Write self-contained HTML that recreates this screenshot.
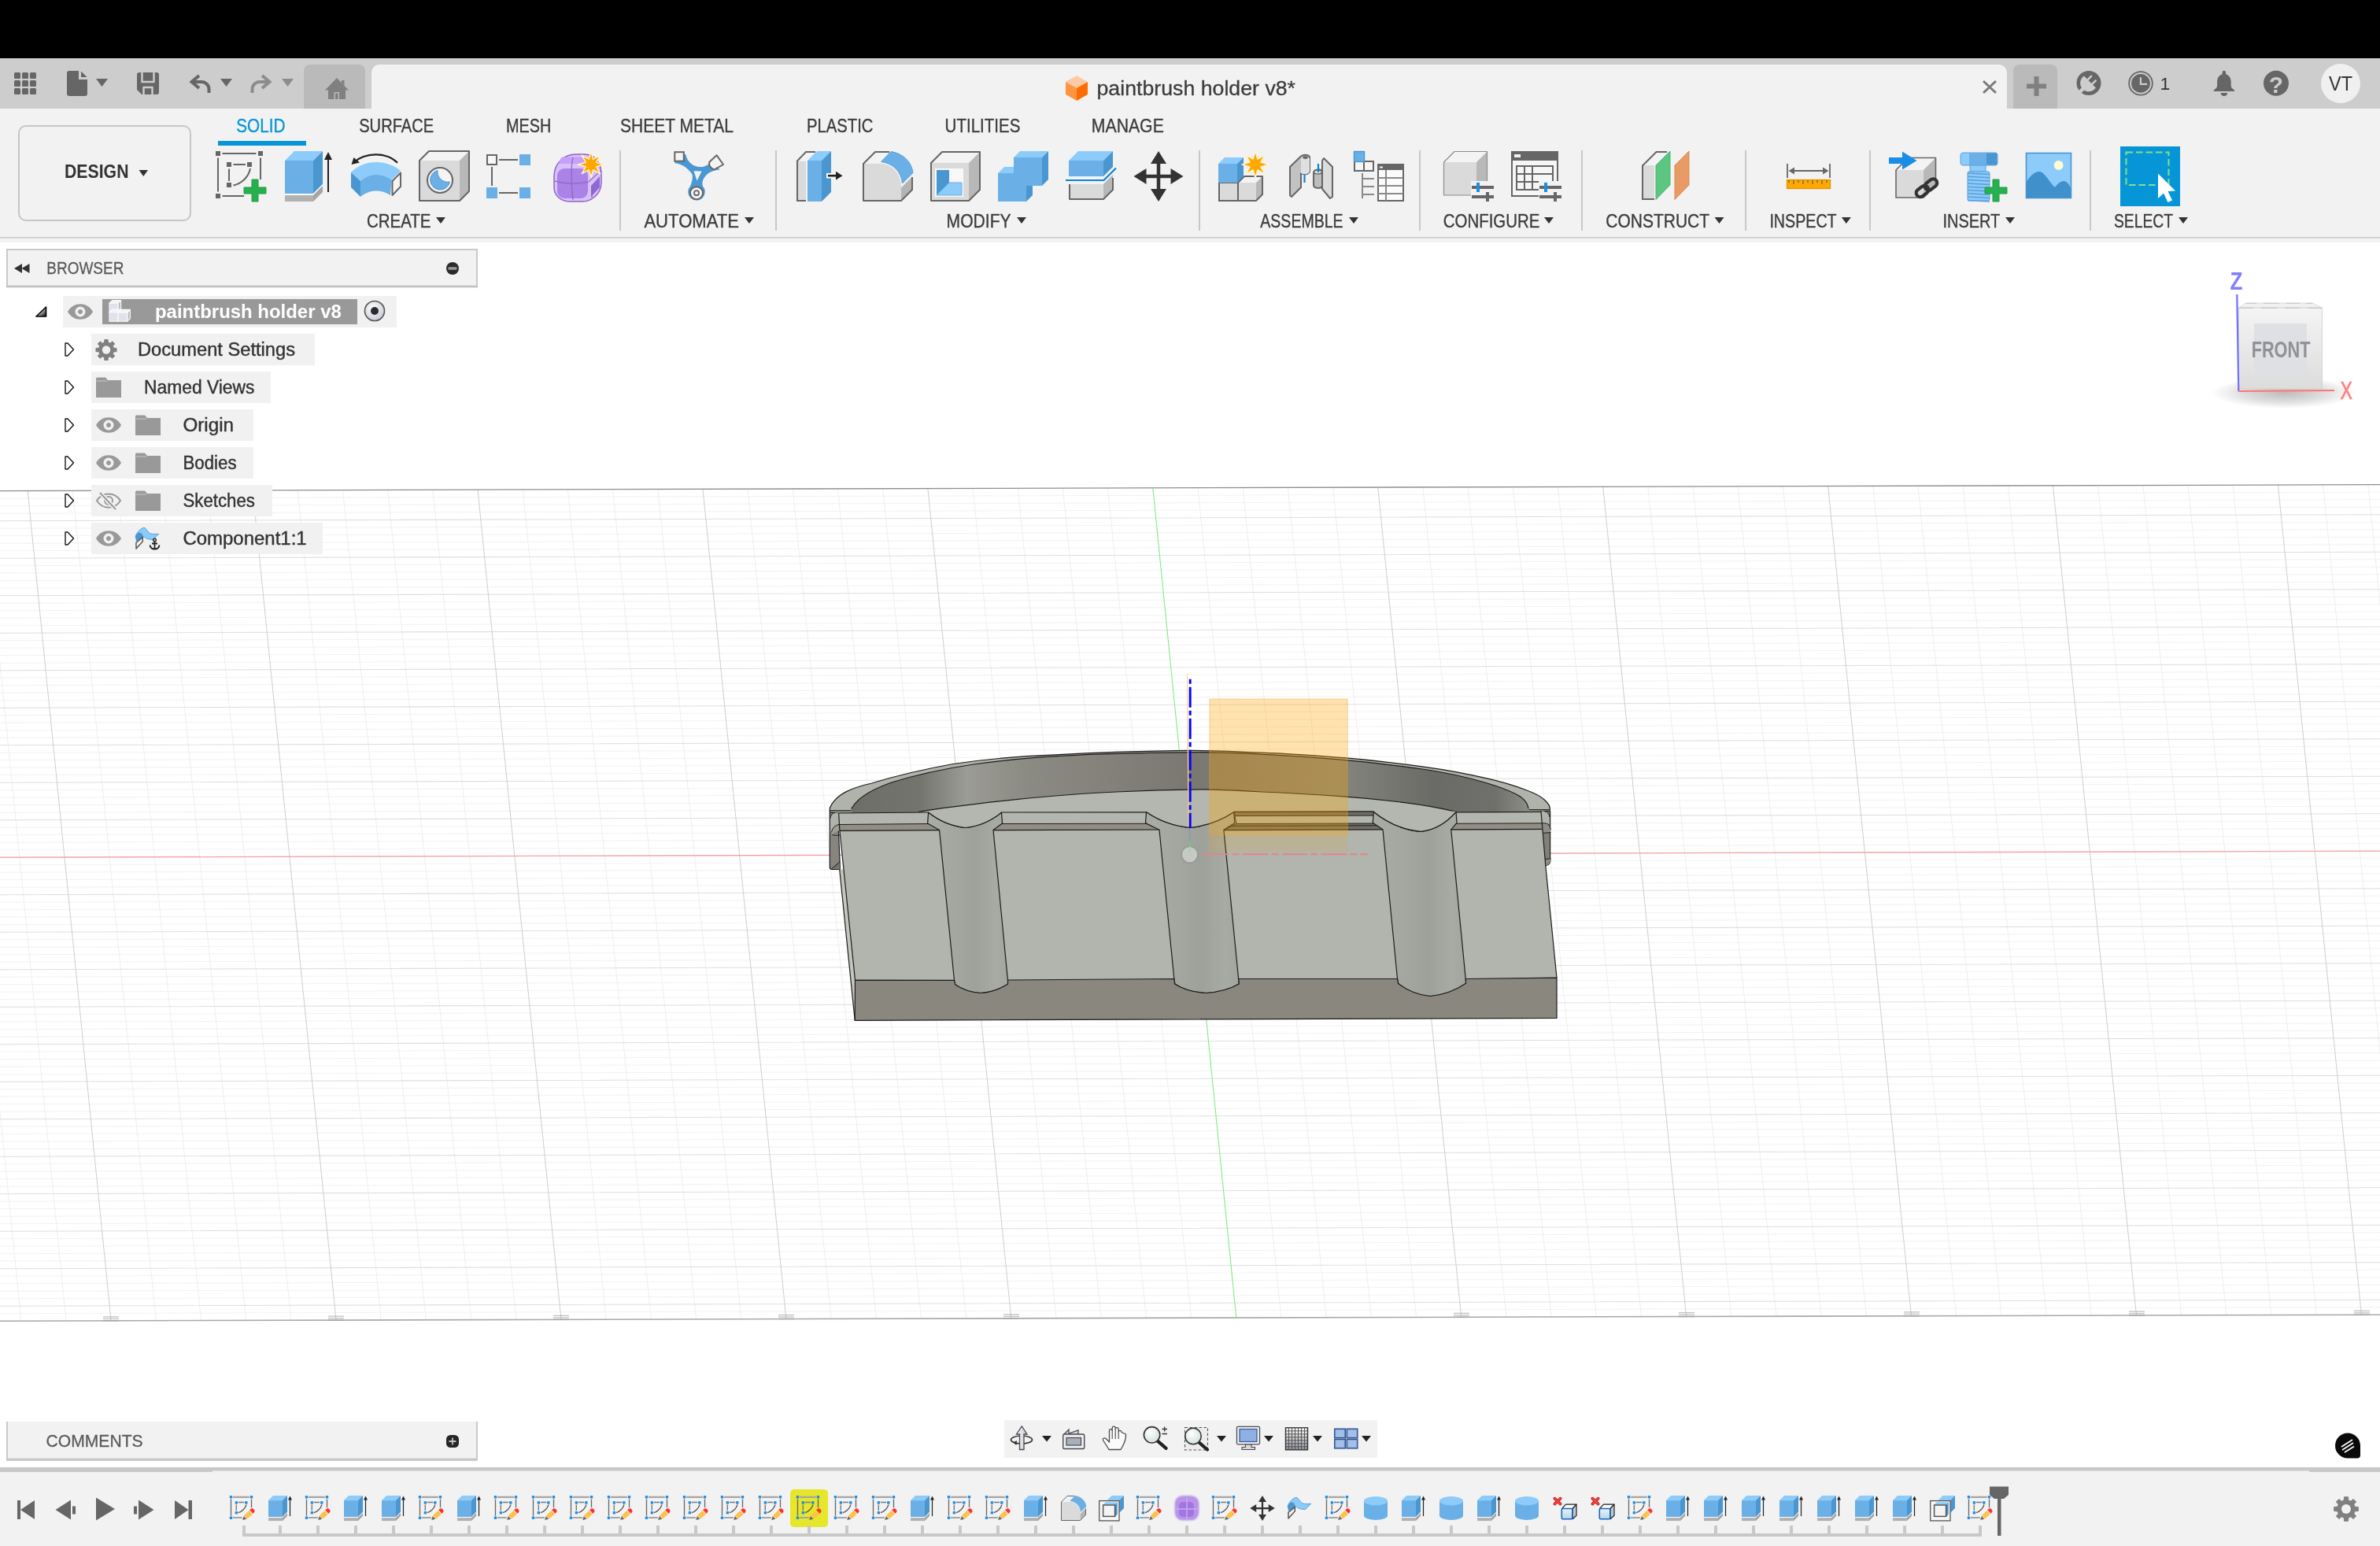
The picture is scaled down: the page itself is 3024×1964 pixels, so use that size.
<!DOCTYPE html>
<html><head><meta charset="utf-8"><title>Fusion</title><style>
html,body{margin:0;padding:0;width:3024px;height:1964px;overflow:hidden;background:#fff}
svg{position:absolute;left:0;top:0;display:block}
text{font-family:"Liberation Sans",sans-serif;white-space:pre;opacity:0.999}
</style></head><body>
<svg width="3024" height="1964" viewBox="0 0 3024 1964">
<g id="canvas">
<rect x="0" y="302" width="3024" height="1562" fill="#ffffff" />
<path d="M0 633.2L3024 625.2M0 642.7L3024 634.7M0 652.2L3024 644.2M0 671.2L3024 663.2M0 680.7L3024 672.7M0 690.2L3024 682.2M0 699.7L3024 691.7M0 718.7L3024 710.7M0 728.2L3024 720.2M0 737.7L3024 729.7M0 747.2L3024 739.2M0 766.2L3024 758.2M0 775.7L3024 767.7M0 785.2L3024 777.2M0 794.7L3024 786.7M0 813.7L3024 805.7M0 823.2L3024 815.2M0 832.7L3024 824.7M0 842.2L3024 834.2M0 861.2L3024 853.2M0 870.7L3024 862.7M0 880.2L3024 872.2M0 889.7L3024 881.7M0 908.7L3024 900.7M0 918.2L3024 910.2M0 927.7L3024 919.7M0 937.2L3024 929.2M0 956.2L3024 948.2M0 965.7L3024 957.7M0 975.2L3024 967.2M0 984.7L3024 976.7M0 1003.7L3024 995.7M0 1013.2L3024 1005.2M0 1022.7L3024 1014.7M0 1032.2L3024 1024.2M0 1051.2L3024 1043.2M0 1060.7L3024 1052.7M0 1070.2L3024 1062.2M0 1079.7L3024 1071.7M0 1098.7L3024 1090.7M0 1108.2L3024 1100.2M0 1117.7L3024 1109.7M0 1127.2L3024 1119.2M0 1146.2L3024 1138.2M0 1155.7L3024 1147.7M0 1165.2L3024 1157.2M0 1174.7L3024 1166.7M0 1193.7L3024 1185.7M0 1203.2L3024 1195.2M0 1212.7L3024 1204.7M0 1222.2L3024 1214.2M0 1241.2L3024 1233.2M0 1250.7L3024 1242.7M0 1260.2L3024 1252.2M0 1269.7L3024 1261.7M0 1288.7L3024 1280.7M0 1298.2L3024 1290.2M0 1307.7L3024 1299.7M0 1317.2L3024 1309.2M0 1336.2L3024 1328.2M0 1345.7L3024 1337.7M0 1355.2L3024 1347.2M0 1364.7L3024 1356.7M0 1383.7L3024 1375.7M0 1393.2L3024 1385.2M0 1402.7L3024 1394.7M0 1412.2L3024 1404.2M0 1431.2L3024 1423.2M0 1440.7L3024 1432.7M0 1450.2L3024 1442.2M0 1459.7L3024 1451.7M0 1478.7L3024 1470.7M0 1488.2L3024 1480.2M0 1497.7L3024 1489.7M0 1507.2L3024 1499.2M0 1526.2L3024 1518.2M0 1535.7L3024 1527.7M0 1545.2L3024 1537.2M0 1554.7L3024 1546.7M0 1573.7L3024 1565.7M0 1583.2L3024 1575.2M0 1592.7L3024 1584.7M0 1602.2L3024 1594.2M0 1621.2L3024 1613.2M0 1630.7L3024 1622.7M0 1640.2L3024 1632.2M0 1649.7L3024 1641.7M0 1668.7L3024 1660.7" fill="none" stroke="#f2f2f2" stroke-width="1" />
<path d="M-79.2 623.9L26.8 1678.1M-22.0 623.8L84.0 1678.0M92.4 623.5L198.3 1677.7M149.6 623.3L255.5 1677.5M206.7 623.2L312.7 1677.4M263.9 623.0L369.9 1677.2M378.3 622.7L484.2 1676.9M435.5 622.5L541.4 1676.8M492.7 622.4L598.6 1676.6M549.9 622.2L655.8 1676.5M664.2 621.9L770.2 1676.2M721.4 621.8L827.4 1676.0M778.6 621.6L884.5 1675.9M835.8 621.5L941.7 1675.7M950.1 621.2L1056.1 1675.4M1007.3 621.0L1113.3 1675.2M1064.5 620.9L1170.5 1675.1M1121.7 620.7L1227.6 1674.9M1236.1 620.4L1342.0 1674.6M1293.3 620.3L1399.2 1674.5M1350.4 620.1L1456.4 1674.3M1407.6 620.0L1513.6 1674.2M1522.0 619.7L1627.9 1673.9M1579.2 619.5L1685.1 1673.7M1636.4 619.4L1742.3 1673.6M1693.5 619.2L1799.5 1673.4M1807.9 618.9L1913.9 1673.1M1865.1 618.8L1971.1 1673.0M1922.3 618.6L2028.2 1672.8M1979.5 618.5L2085.4 1672.7M2093.8 618.2L2199.8 1672.4M2151.0 618.0L2257.0 1672.2M2208.2 617.8L2314.2 1672.1M2265.4 617.7L2371.3 1671.9M2379.8 617.4L2485.7 1671.6M2437.0 617.2L2542.9 1671.5M2494.1 617.1L2600.1 1671.3M2551.3 616.9L2657.3 1671.2M2665.7 616.6L2771.6 1670.9M2722.9 616.5L2828.8 1670.7M2780.1 616.3L2886.0 1670.6M2837.2 616.2L2943.2 1670.4M2951.6 615.9L3057.6 1670.1M3008.8 615.7L3114.7 1669.9" fill="none" stroke="#eeeeee" stroke-width="1" />
<path d="M0 661.7L3024 653.7M0 709.2L3024 701.2M0 756.7L3024 748.7M0 804.2L3024 796.2M0 851.7L3024 843.7M0 899.2L3024 891.2M0 946.7L3024 938.7M0 994.2L3024 986.2M0 1041.7L3024 1033.7M0 1089.2L3024 1081.2M0 1136.7L3024 1128.7M0 1184.2L3024 1176.2M0 1231.7L3024 1223.7M0 1279.2L3024 1271.2M0 1326.7L3024 1318.7M0 1374.2L3024 1366.2M0 1421.7L3024 1413.7M0 1469.2L3024 1461.2M0 1516.7L3024 1508.7M0 1564.2L3024 1556.2M0 1611.7L3024 1603.7M0 1659.2L3024 1651.2" fill="none" stroke="#dedede" stroke-width="1.05" />
<path d="M35.2 623.6L141.1 1677.8M321.1 622.8L427.1 1677.1M607.0 622.1L713.0 1676.3M893.0 621.3L998.9 1675.6M1178.9 620.6L1284.8 1674.8M1750.7 619.1L1856.7 1673.3M2036.7 618.3L2142.6 1672.5M2322.6 617.5L2428.5 1671.8M2608.5 616.8L2714.5 1671.0M2894.4 616.0L3000.4 1670.2" fill="none" stroke="#d0d0d0" stroke-width="1.05" />
<path d="M0 623.7L3024 615.7" fill="none" stroke="#8e8e8e" stroke-width="1.3" />
<path d="M0 1678.2L3024 1670.2" fill="none" stroke="#a8a8a8" stroke-width="1.6" />
<rect x="130.955" y="1672.23" width="20" height="1.3" fill="#9a9a9a" opacity="0.6"/>
<rect x="130.955" y="1674.73" width="20" height="1.3" fill="#9a9a9a" opacity="0.6"/>
<rect x="130.955" y="1677.23" width="20" height="1.3" fill="#9a9a9a" opacity="0.6"/>
<rect x="416.955" y="1671.47" width="20" height="1.3" fill="#9a9a9a" opacity="0.6"/>
<rect x="416.955" y="1673.97" width="20" height="1.3" fill="#9a9a9a" opacity="0.6"/>
<rect x="416.955" y="1676.47" width="20" height="1.3" fill="#9a9a9a" opacity="0.6"/>
<rect x="702.955" y="1670.71" width="20" height="1.3" fill="#9a9a9a" opacity="0.6"/>
<rect x="702.955" y="1673.21" width="20" height="1.3" fill="#9a9a9a" opacity="0.6"/>
<rect x="702.955" y="1675.71" width="20" height="1.3" fill="#9a9a9a" opacity="0.6"/>
<rect x="988.955" y="1669.95" width="20" height="1.3" fill="#9a9a9a" opacity="0.6"/>
<rect x="988.955" y="1672.45" width="20" height="1.3" fill="#9a9a9a" opacity="0.6"/>
<rect x="988.955" y="1674.95" width="20" height="1.3" fill="#9a9a9a" opacity="0.6"/>
<rect x="1274.96" y="1669.19" width="20" height="1.3" fill="#9a9a9a" opacity="0.6"/>
<rect x="1274.96" y="1671.69" width="20" height="1.3" fill="#9a9a9a" opacity="0.6"/>
<rect x="1274.96" y="1674.19" width="20" height="1.3" fill="#9a9a9a" opacity="0.6"/>
<rect x="1846.96" y="1667.68" width="20" height="1.3" fill="#9a9a9a" opacity="0.6"/>
<rect x="1846.96" y="1670.18" width="20" height="1.3" fill="#9a9a9a" opacity="0.6"/>
<rect x="1846.96" y="1672.68" width="20" height="1.3" fill="#9a9a9a" opacity="0.6"/>
<rect x="2132.96" y="1666.92" width="20" height="1.3" fill="#9a9a9a" opacity="0.6"/>
<rect x="2132.96" y="1669.42" width="20" height="1.3" fill="#9a9a9a" opacity="0.6"/>
<rect x="2132.96" y="1671.92" width="20" height="1.3" fill="#9a9a9a" opacity="0.6"/>
<rect x="2418.96" y="1666.16" width="20" height="1.3" fill="#9a9a9a" opacity="0.6"/>
<rect x="2418.96" y="1668.66" width="20" height="1.3" fill="#9a9a9a" opacity="0.6"/>
<rect x="2418.96" y="1671.16" width="20" height="1.3" fill="#9a9a9a" opacity="0.6"/>
<rect x="2704.96" y="1665.41" width="20" height="1.3" fill="#9a9a9a" opacity="0.6"/>
<rect x="2704.96" y="1667.91" width="20" height="1.3" fill="#9a9a9a" opacity="0.6"/>
<rect x="2704.96" y="1670.41" width="20" height="1.3" fill="#9a9a9a" opacity="0.6"/>
<rect x="2990.96" y="1664.65" width="20" height="1.3" fill="#9a9a9a" opacity="0.6"/>
<rect x="2990.96" y="1667.15" width="20" height="1.3" fill="#9a9a9a" opacity="0.6"/>
<rect x="2990.96" y="1669.65" width="20" height="1.3" fill="#9a9a9a" opacity="0.6"/>
<path d="M0 1089.2L3024 1081.2" fill="none" stroke="#f5a3a3" stroke-width="1.3" />
<path d="M1464.8 619.8L1570.8 1674.0" fill="none" stroke="#80e880" stroke-width="1.05" />
<defs>
<linearGradient id="wall" x1="0" y1="0" x2="1" y2="0">
<stop offset="0" stop-color="#6e6e69"/><stop offset="0.10" stop-color="#74746e"/><stop offset="0.17" stop-color="#9b9c95"/><stop offset="0.26" stop-color="#8b8a83"/>
<stop offset="0.5" stop-color="#7b7871"/><stop offset="0.72" stop-color="#85857e"/><stop offset="0.86" stop-color="#6a6b66"/><stop offset="0.95" stop-color="#6f706b"/><stop offset="1" stop-color="#8c8d87"/></linearGradient>
<linearGradient id="grv" x1="0" y1="0" x2="1" y2="0">
<stop offset="0" stop-color="#a9aca5"/><stop offset="0.35" stop-color="#a4a7a0"/><stop offset="0.6" stop-color="#9ea19a"/><stop offset="0.85" stop-color="#a8aba4"/><stop offset="1" stop-color="#a2a59e"/></linearGradient>
</defs>
<path d="M1054.6 1026C1062 1008 1085 1000 1107.6 995C1140 985 1175 977 1211 970.5C1255 964 1297 960.5 1340.6 958.8C1392 956 1444 954.3 1495.8 953.6C1530 953 1570 954.5 1603.5 956.2C1640 957.5 1672 960 1707 962.7C1745 966 1778 970 1810.6 974.3C1838 978 1864 983 1888.2 988.6C1908 993 1926 998.500 1940 1004C1952 1008.500 1960 1013 1963.3 1017C1967 1020.500 1969 1023 1969 1026L1969 1035L1054.6 1035Z" fill="#b0b3ab" />
<path d="M1081.8 1027.4C1090 1012 1110 1002 1133.5 993.8C1165 984 1200 976.500 1237 971C1280 965 1322 961 1366.4 959.3C1418 957 1470 956 1521.7 955.7C1585 956 1648 960.500 1707 965.3C1745 968.500 1778 973 1810.6 977.5C1838 981.500 1866 988 1888.2 994.5C1905 999.500 1918 1004.500 1927 1009.3C1936 1014 1941 1020 1942 1027.4L1942 1035L1081.8 1035Z" fill="url(#wall)" />
<path d="M1167.2 1031.3C1205 1025 1245 1020.500 1288.8 1015.8C1332 1011.500 1374 1008 1418.2 1006C1455 1004 1492 1002.900 1530 1002.8C1555 1003.200 1580 1004.500 1603.5 1006C1640 1007.500 1673 1009.500 1707 1011.9C1735 1014 1760 1016.500 1784.7 1019.6C1808 1022.500 1830 1026.500 1850.7 1031.3L1850.7 1060L1167.2 1060Z" fill="#b4b7af" />
<path d="M1054.6 1026C1062 1008 1085 1000 1107.6 995C1140 985 1175 977 1211 970.5C1255 964 1297 960.5 1340.6 958.8C1392 956 1444 954.3 1495.8 953.6C1530 953 1570 954.5 1603.5 956.2C1640 957.5 1672 960 1707 962.7C1745 966 1778 970 1810.6 974.3C1838 978 1864 983 1888.2 988.6C1908 993 1926 998.500 1940 1004C1952 1008.500 1960 1013 1963.3 1017C1967 1020.500 1969 1023 1969 1026" fill="none" stroke="#1c1c1c" stroke-width="1.2" />
<path d="M1054.4 1025.500V1031M1969.300 1025.500V1031" fill="none" stroke="#1c1c1c" stroke-width="1.2" />
<path d="M1081.8 1027.4C1090 1012 1110 1002 1133.5 993.8C1165 984 1200 976.500 1237 971C1280 965 1322 961 1366.4 959.3C1418 957 1470 956 1521.7 955.7C1585 956 1648 960.500 1707 965.3C1745 968.500 1778 973 1810.6 977.5C1838 981.500 1866 988 1888.2 994.5C1905 999.500 1918 1004.500 1927 1009.3C1936 1014 1941 1020 1942 1027.4" fill="none" stroke="#1c1c1c" stroke-width="1.2" />
<path d="M1167.2 1031.3C1205 1025 1245 1020.500 1288.8 1015.8C1332 1011.500 1374 1008 1418.2 1006C1455 1004 1492 1002.900 1530 1002.8C1555 1003.200 1580 1004.500 1603.5 1006C1640 1007.500 1673 1009.500 1707 1011.9C1735 1014 1760 1016.500 1784.7 1019.6C1808 1022.500 1830 1026.500 1850.7 1031.3" fill="none" stroke="#1c1c1c" stroke-width="1.2" />
<polygon points="1054.6,1029.6 1081.5,1029.8 1081.8,1032.4 1054.6,1032.4" fill="#8d8b83" />
<polygon points="1942.5,1028.6 1969.4,1028.4 1969.4,1031 1942.2,1030.6" fill="#8d8b83" />
<path d="M1054.6 1029.700H1081.5M1942.5 1028.600H1969.4" fill="none" stroke="#1c1c1c" stroke-width="1" />
<path d="M1054.3 1030V1101.500Q1054.3 1104.500 1057 1104.500H1067.5L1064.500 1032.500H1054.3Z" fill="#86857e" stroke="#1c1c1c" stroke-width="1.2" stroke-linejoin="round"/>
<path d="M1061 1032.500H1065.500L1066.300 1047.500C1061 1048 1057.500 1052 1056.400 1057.500L1055 1057.500V1040C1055 1036 1057.500 1033 1061 1032.500Z" fill="#b0b3ab" />
<path d="M1056.400 1057.500C1057.500 1052 1061 1048 1066.300 1047.500L1066.800 1055.300C1062 1056 1058.500 1058 1057.200 1060.500Z" fill="#a09d94" />
<polygon points="1056.8,1103.5 1067,1095 1067.5,1104.5" fill="#74736d" />
<path d="M1061 1032.500C1057.500 1033 1055 1036 1054.800 1040M1066.300 1047.500C1061 1048 1057.500 1052 1056.400 1057.500M1057.200 1060.500C1060 1061.500 1063 1061.500 1067 1061M1056.800 1103.500L1067 1095" fill="none" stroke="#1c1c1c" stroke-width="1" />
<path d="M1957.8 1030.500H1969.600V1090C1970.600 1095 1968 1098.500 1964.200 1099.800L1962.800 1099.800Z" fill="#807f78" stroke="#1c1c1c" stroke-width="1.2" stroke-linejoin="round"/>
<path d="M1957.8 1030.500H1962C1966 1031 1968.500 1034 1968.900 1038V1047C1967 1046.200 1965 1046 1962.900 1046H1958.700Z" fill="#b0b3ab" />
<path d="M1958.700 1045.800H1962.900C1967 1046 1969.800 1049 1970.200 1054V1057.500L1959.700 1058.500Z" fill="#8f8e86" />
<path d="M1962.300 1091.500L1970.500 1090.800C1970.800 1095 1968 1098.500 1964.200 1099.800L1962.900 1099.800Z" fill="#8f8e86" />
<path d="M1962 1030.600C1966 1031 1968.500 1034 1968.900 1038M1958.700 1045.800H1962.900C1967 1046 1969.800 1049 1970.200 1054M1959.700 1058.500L1970.400 1057.500M1962.300 1091.500L1970.500 1090.800" fill="none" stroke="#1c1c1c" stroke-width="1" />
<path d="M1065.5 1033L1958 1030.8L1963.7 1098.5L1978 1242.2L1978 1293.4L1086.2 1296.3L1086.5 1245.1L1066.9 1055.3Z" fill="#b1b5ad" />
<polygon points="1066.7,1104.5 1071.9,1104.5 1086.5,1245.1 1086.2,1296.3" fill="#c3c6be" />
<polygon points="1065.5,1033 1179.6,1032 1180.6,1046.5 1064.5,1047.5" fill="#b3b6ae" /><polygon points="1064.5,1047.5 1180.6,1046.5 1193.6,1054.8 1066.9,1056" fill="#938e84" /><path d="M1064.5 1047.5L1180.6 1046.5" fill="none" stroke="#1c1c1c" stroke-width="1" />
<polygon points="1272.5,1032 1456.5,1031.8 1457.5,1046.3 1271.5,1046.5" fill="#b3b6ae" /><polygon points="1271.5,1046.5 1457.5,1046.3 1473,1054.6 1262,1055" fill="#938e84" /><path d="M1271.5 1046.5L1457.5 1046.3" fill="none" stroke="#1c1c1c" stroke-width="1" />
<polygon points="1850,1031.8 1958,1031.3 1959,1045.8 1849,1046.3" fill="#b3b6ae" /><polygon points="1849,1046.3 1959,1045.8 1959.4,1054.1 1843.7,1054.8" fill="#938e84" /><path d="M1849 1046.3L1959 1045.8" fill="none" stroke="#1c1c1c" stroke-width="1" />
<polygon points="1567.8,1031.3 1745.3,1030.8 1746,1036 1569,1036.5" fill="#6f6d65" />
<polygon points="1569,1036.5 1746,1036 1749,1046 1571,1046.5" fill="#b3b6ae" />
<polygon points="1571,1046.5 1749,1046 1757,1053.8 1554.9,1054.6 1565,1049" fill="#716e66" />
<path d="M1569 1036.5L1746 1036M1571 1046.5L1749 1046M1565 1049.300L1752 1048.800M1567.8 1031.3L1569 1036.500L1571 1046.500L1565 1049.300L1554.9 1054.6" fill="none" stroke="#1c1c1c" stroke-width="1" />
<path d="M1179.6 1032Q1200.15 1048.5 1226.7 1051.5Q1252.6 1048.5 1272.5 1032L1273.5 1046L1262 1054.6L1280.5 1245.5L1281.0 1250.5Q1267.25 1260.5 1246 1261.5Q1225.25 1260.5 1213.5 1250.5L1212.5 1245.5L1193.6 1054.6L1178.6 1046Z" fill="url(#grv)" stroke="#1c1c1c" stroke-width="1.2" stroke-linejoin="round"/><path d="M1179.6 1032Q1200.15 1048.5 1226.7 1051.5Q1252.6 1048.5 1272.5 1032L1272.5 1031.4L1179.6 1031.4Z" fill="#b4b7af" /><path d="M1179.6 1032Q1200.15 1048.5 1226.7 1051.5Q1252.6 1048.5 1272.5 1032" fill="none" stroke="#1c1c1c" stroke-width="1.2" />
<path d="M1456.5 1031.6Q1481.05 1048.5 1511.6 1051.5Q1542.6999999999998 1048.5 1567.8 1031.6L1568.8 1045.6L1554.9 1054.3L1573.8 1245L1574.3 1250Q1557.05 1260.5 1532.3 1261.5Q1508.15 1260.5 1493 1250L1492 1245L1473 1054.3L1455.5 1045.6Z" fill="url(#grv)" stroke="#1c1c1c" stroke-width="1.2" stroke-linejoin="round"/><path d="M1456.5 1031.6Q1481.05 1048.5 1511.6 1051.5Q1542.6999999999998 1048.5 1567.8 1031.6L1567.8 1031.0L1456.5 1031.0Z" fill="#b4b7af" /><path d="M1456.5 1031.6Q1481.05 1048.5 1511.6 1051.5Q1542.6999999999998 1048.5 1567.8 1031.6" fill="none" stroke="#1c1c1c" stroke-width="1.2" />
<path d="M1745.3 1031.3Q1772.35 1053.4 1805.4 1056.4Q1830.7 1053.4 1850 1031.3L1851 1045.3L1843.7 1053.8L1862.3 1244.2L1862.8 1249.2Q1843.65 1264.5 1817 1265.5Q1792.3 1264.5 1776.6 1249.2L1775.6 1244.2L1757 1053.8L1744.3 1045.3Z" fill="url(#grv)" stroke="#1c1c1c" stroke-width="1.2" stroke-linejoin="round"/><path d="M1745.3 1031.3Q1772.35 1053.4 1805.4 1056.4Q1830.7 1053.4 1850 1031.3L1850 1030.7L1745.3 1030.7Z" fill="#b4b7af" /><path d="M1745.3 1031.3Q1772.35 1053.4 1805.4 1056.4Q1830.7 1053.4 1850 1031.3" fill="none" stroke="#1c1c1c" stroke-width="1.2" />
<path d="M1086.5 1245.1L1212.5 1245.3L1213.7 1250.7Q1227 1260 1246 1261.500Q1265 1260 1280.5 1250L1280.5 1245L1492 1243.5L1492.5 1250Q1508 1260 1532.3 1261.500Q1556 1260 1574.3 1250L1573.8 1243.5L1775.6 1243.5L1776.4 1249.2Q1794 1263 1817 1265.500Q1842 1263 1862.5 1249.2L1862.3 1243.5L1978 1242.2L1978 1293.4L1086.2 1296.3Z" fill="#8a877f" stroke="#1c1c1c" stroke-width="1.2" stroke-linejoin="round"/>
<path d="M1066.9 1055.3L1193.6 1054.6M1262 1054.6L1473 1054M1554.9 1054.6L1757 1053.8M1843.7 1053.8L1959.4 1053.3" fill="none" stroke="#1c1c1c" stroke-width="1.2" />
<path d="M1065.5 1033L1179.6 1032M1272.5 1032L1456.5 1031.8M1850 1031.8L1958 1031.3M1567.8 1031.3L1745.3 1030.8" fill="none" stroke="#1c1c1c" stroke-width="1.2" />
<path d="M1065.6 1033L1066.9 1055.3L1086.5 1245.1" fill="none" stroke="#1c1c1c" stroke-width="1.2" />
<path d="M1066.7 1104.5L1086.2 1296.3" fill="none" stroke="#1c1c1c" stroke-width="1.2" />
<path d="M1958 1030.8L1963.7 1098.5L1978 1242.2" fill="none" stroke="#1c1c1c" stroke-width="1.2" />
<rect x="1536.9" y="888" width="175.3" height="172.9" fill="#ffa500" stroke="#f0a030" stroke-width="0.8" fill-opacity="0.32" stroke-opacity="0.5"/>
<rect x="1535.5" y="1061" width="176" height="20.8" fill="#ffa500" opacity="0.13"/>
<polygon points="1508.1,855.5 1508.9,855.5 1511.2,1050 1509.4,1050" fill="#f5c583" />
<path d="M1512.2 862.700V1051.6" fill="none" stroke="#0404f5" stroke-width="2.9" stroke-dasharray="6 4 26 4"/>
<path d="M1512 1052V1068.700" fill="none" stroke="#8a96b4" stroke-width="1.4" />
<path d="M1511.8 1068.700V1086" fill="none" stroke="#62d862" stroke-width="1.4" />
<circle cx="1511.6" cy="1085.6" r="10.600" fill="#cbcec8" fill-opacity="0.9" stroke="#9a9a9a" stroke-width="2"/>
<path d="M1511.6 1074V1084" fill="none" stroke="#8fdc8f" stroke-width="1.2" />
<path d="M1528.5 1085.3H1738" fill="none" stroke="#e8837f" stroke-width="1.9" stroke-dasharray="33 4 9 4"/>
<defs><radialGradient id="vcs" cx="50%" cy="50%" r="50%"><stop offset="0" stop-color="#000" stop-opacity="0.26"/><stop offset="0.6" stop-color="#000" stop-opacity="0.12"/><stop offset="1" stop-color="#000" stop-opacity="0"/></radialGradient><linearGradient id="vcf" x1="0" y1="0" x2="0" y2="1"><stop offset="0" stop-color="#f4f4f4"/><stop offset="1" stop-color="#dcdcdc"/></linearGradient></defs><ellipse cx="2902" cy="499" rx="92" ry="20" fill="url(#vcs)"/><polygon points="2844.5,391 2853,385 2938,385 2950.5,391" fill="#f0f0f0" stroke="#d5d5d5" stroke-width="0.8" /><rect x="2844.5" y="391" width="106" height="103" fill="url(#vcf)" stroke="#cfcfcf" stroke-width="0.8" /><path d="M2853 385.300H2938" fill="none" stroke="#c4c4c4" stroke-width="1" stroke-dasharray="14 9 20 9 17 8"/><path d="M2845 391.300H2950" fill="none" stroke="#c4c4c4" stroke-width="1" stroke-dasharray="18 10 20 10 19 10"/><rect x="2864" y="411" width="67" height="65" fill="#dfe0e3" /><text x="2860.7" y="454.4" font-size="28.6" fill="#8f9196" textLength="74.7" lengthAdjust="spacingAndGlyphs" font-weight="bold" >FRONT</text><path d="M2842.300 374L2844.300 497" fill="none" stroke="#7070ff" stroke-width="2.2" /><path d="M2844.300 497L2966 496" fill="none" stroke="#ff7474" stroke-width="2" /><text x="2833.5" y="368.4" font-size="31.5" fill="#8080ff" textLength="16" lengthAdjust="spacingAndGlyphs" font-weight="bold" >Z</text><text x="2973.5" y="506.5" font-size="30.5" fill="#ff8080" textLength="15.5" lengthAdjust="spacingAndGlyphs" stroke="#ff8080" stroke-width="0.700">X</text>
</g>
<g id="chrome">
<rect x="0" y="0" width="3024" height="74" fill="#000" />
<rect x="0" y="74" width="3024" height="64" fill="#cdcdcd" />
<path d="M386 138V90a8 8 0 0 1 8-8H456a8 8 0 0 1 8 8V138Z" fill="#bababa" />
<path d="M472 138V92a10 10 0 0 1 10-10H2540a10 10 0 0 1 10 10V138Z" fill="#f2f2f2" />
<path d="M2558 138V90a8 8 0 0 1 8-8H2606a8 8 0 0 1 8 8V138Z" fill="#bababa" />
<rect x="0" y="138" width="3024" height="170" fill="#f2f2f2" />
<rect x="0" y="301" width="3024" height="1.5" fill="#c9c9c9" />
<rect x="18" y="92" width="8" height="8" fill="#666" rx="1.5" />
<rect x="18" y="102" width="8" height="8" fill="#666" rx="1.5" />
<rect x="18" y="112" width="8" height="8" fill="#666" rx="1.5" />
<rect x="28" y="92" width="8" height="8" fill="#666" rx="1.5" />
<rect x="28" y="102" width="8" height="8" fill="#666" rx="1.5" />
<rect x="28" y="112" width="8" height="8" fill="#666" rx="1.5" />
<rect x="38" y="92" width="8" height="8" fill="#666" rx="1.5" />
<rect x="38" y="102" width="8" height="8" fill="#666" rx="1.5" />
<rect x="38" y="112" width="8" height="8" fill="#666" rx="1.5" />
<path d="M88 90H100V101H111V119a3 3 0 0 1-3 3H88a3 3 0 0 1-3-3V93a3 3 0 0 1 3-3Z M103 90.5L110.5 98H103Z" fill="#666" />
<polygon points="122,100 137,100 129.5,110" fill="#666" />
<path d="M177 92H199a3 3 0 0 1 3 3V117a3 3 0 0 1-3 3H180L174 114V95a3 3 0 0 1 3-3Z" fill="#666" />
<path d="M180.5 92V104H195.5V92 M182.5 120V111H193.5V120" fill="none" stroke="#cdcdcd" stroke-width="2.4" />
<path d="M253 96L243.5 104L253 112 M244 104H256a9.5 9.5 0 0 1 9.5 9.5V118" fill="none" stroke="#666" stroke-width="4" stroke-linejoin="miter"/>
<polygon points="280,100 295,100 287.5,110" fill="#666" />
<path d="M333 96L342.5 104L333 112 M342 104H330a9.5 9.5 0 0 0-9.5 9.5V118" fill="none" stroke="#8c8c8c" stroke-width="4" />
<polygon points="358,100 373,100 365.5,110" fill="#8c8c8c" />
<path d="M428 99L413 114.5H417V126H439V114.5H443ZM434 102h3.500v7l-3.500-3.500Z" fill="#808080" />
<path d="M425.300 126V117.700H430.300V126" fill="none" stroke="#bababa" stroke-width="1.5" />
<polygon points="1368,96 1382,104 1368,112 1354,104" fill="#ffc9a3" />
<polygon points="1354,104 1368,112 1368,128 1354,120" fill="#ff9443" />
<polygon points="1382,104 1368,112 1368,128 1382,120" fill="#ff6b00" />
<text x="1393.5" y="120.5" font-size="26" fill="#3c3c3c" textLength="252.5" lengthAdjust="spacingAndGlyphs" stroke="#3c3c3c" stroke-width="0.3">paintbrush holder v8*</text>
<path d="M2520 103L2536 118M2536 103L2520 118" fill="none" stroke="#7a7a7a" stroke-width="3" />
<path d="M2587.5 97V122M2575 109.5H2600" fill="none" stroke="#808080" stroke-width="6" />
<circle cx="2654" cy="105.500" r="15.500" fill="#666"/>
<g transform="translate(2654 105.500) rotate(-45)" fill="#cdcdcd"><path d="M2 -10.600A10.800 10.800 0 1 0 2 10.600Z"/><rect x="1" y="-5.200" width="8.500" height="2.500" rx="1"/><rect x="1" y="2.700" width="8.500" height="2.500" rx="1"/><rect x="-16.500" y="-2.300" width="7" height="4.600"/></g>
<circle cx="2720" cy="105.900" r="14.800" fill="none" stroke="#666" stroke-width="1.800"/>
<circle cx="2720" cy="105.900" r="11.900" fill="#666"/>
<path d="M2719.900 98.200V106.900H2728" fill="none" stroke="#cdcdcd" stroke-width="2.2" />
<text x="2744.5" y="113.9" font-size="22.9" fill="#333" >1</text>
<path d="M2823.700 92a2.200 2.200 0 0 1 4.400 0V94.300C2832.500 95.500 2834.700 99.500 2834.700 104V108.500C2834.700 110.500 2835.500 111.800 2836.800 112.800L2839 114.500V116H2812.800V114.500L2815 112.800C2816.300 111.800 2817.100 110.500 2817.100 108.500V104C2817.100 99.500 2819.300 95.500 2823.700 94.300ZM2821.700 118.100H2830.100A4.200 4 0 0 1 2821.700 118.100Z" fill="#666" />
<circle cx="2892" cy="105.800" r="16" fill="#666"/>
<text x="2892" y="117.6" font-size="30" fill="#cdcdcd" font-weight="bold" text-anchor="middle" >?</text>
<circle cx="2974" cy="106" r="25" fill="#f0f0f0"/>
<text x="2974" y="115" font-size="26" fill="#333" textLength="30" lengthAdjust="spacingAndGlyphs" text-anchor="middle" >VT</text>
<text x="300.3" y="168.3" font-size="23.2" fill="#0696d7" textLength="62.1" lengthAdjust="spacingAndGlyphs" stroke="#0696d7" stroke-width="0.35">SOLID</text>
<text x="456.2" y="168.3" font-size="23.2" fill="#3c3c3c" textLength="95" lengthAdjust="spacingAndGlyphs" stroke="#3c3c3c" stroke-width="0.35">SURFACE</text>
<text x="643" y="168.3" font-size="23.2" fill="#3c3c3c" textLength="57.3" lengthAdjust="spacingAndGlyphs" stroke="#3c3c3c" stroke-width="0.35">MESH</text>
<text x="788" y="168.3" font-size="23.2" fill="#3c3c3c" textLength="144" lengthAdjust="spacingAndGlyphs" stroke="#3c3c3c" stroke-width="0.35">SHEET METAL</text>
<text x="1025" y="168.3" font-size="23.2" fill="#3c3c3c" textLength="84.4" lengthAdjust="spacingAndGlyphs" stroke="#3c3c3c" stroke-width="0.35">PLASTIC</text>
<text x="1200.6" y="168.3" font-size="23.2" fill="#3c3c3c" textLength="95.9" lengthAdjust="spacingAndGlyphs" stroke="#3c3c3c" stroke-width="0.35">UTILITIES</text>
<text x="1386.8" y="168.3" font-size="23.2" fill="#3c3c3c" textLength="92" lengthAdjust="spacingAndGlyphs" stroke="#3c3c3c" stroke-width="0.35">MANAGE</text>
<rect x="277" y="179" width="112" height="6" fill="#0696d7" />
<rect x="24" y="160" width="218" height="120" fill="#f2f2f2" stroke="#c6c6c6" stroke-width="2" rx="9" />
<text x="82" y="226" font-size="23" fill="#333" textLength="81.5" lengthAdjust="spacingAndGlyphs" font-weight="bold" >DESIGN</text>
<polygon points="176.5,216 188,216 182.25,224" fill="#333" />
<text x="466" y="289" font-size="23.2" fill="#3c3c3c" textLength="81.5" lengthAdjust="spacingAndGlyphs" stroke="#3c3c3c" stroke-width="0.35">CREATE</text>
<polygon points="554,276 566,276 560,284" fill="#333" />
<text x="818.4" y="289" font-size="23.2" fill="#3c3c3c" textLength="120.6" lengthAdjust="spacingAndGlyphs" stroke="#3c3c3c" stroke-width="0.35">AUTOMATE</text>
<polygon points="946,276 958,276 952,284" fill="#333" />
<text x="1202.6" y="289" font-size="23.2" fill="#3c3c3c" textLength="82" lengthAdjust="spacingAndGlyphs" stroke="#3c3c3c" stroke-width="0.35">MODIFY</text>
<polygon points="1292,276 1304,276 1298,284" fill="#333" />
<text x="1601.3" y="289" font-size="23.2" fill="#3c3c3c" textLength="105.3" lengthAdjust="spacingAndGlyphs" stroke="#3c3c3c" stroke-width="0.35">ASSEMBLE</text>
<polygon points="1714,276 1726,276 1720,284" fill="#333" />
<text x="1833.8" y="289" font-size="23.2" fill="#3c3c3c" textLength="122.5" lengthAdjust="spacingAndGlyphs" stroke="#3c3c3c" stroke-width="0.35">CONFIGURE</text>
<polygon points="1962,276 1974,276 1968,284" fill="#333" />
<text x="2040.3" y="289" font-size="23.2" fill="#3c3c3c" textLength="131.7" lengthAdjust="spacingAndGlyphs" stroke="#3c3c3c" stroke-width="0.35">CONSTRUCT</text>
<polygon points="2178.5,276 2190.5,276 2184.5,284" fill="#333" />
<text x="2248.4" y="289" font-size="23.2" fill="#3c3c3c" textLength="85.2" lengthAdjust="spacingAndGlyphs" stroke="#3c3c3c" stroke-width="0.35">INSPECT</text>
<polygon points="2339.8,276 2351.8,276 2345.8,284" fill="#333" />
<text x="2468.5" y="289" font-size="23.2" fill="#3c3c3c" textLength="72.8" lengthAdjust="spacingAndGlyphs" stroke="#3c3c3c" stroke-width="0.35">INSERT</text>
<polygon points="2548,276 2560,276 2554,284" fill="#333" />
<text x="2686" y="289" font-size="23.2" fill="#3c3c3c" textLength="75" lengthAdjust="spacingAndGlyphs" stroke="#3c3c3c" stroke-width="0.35">SELECT</text>
<polygon points="2768,276 2780,276 2774,284" fill="#333" />
<rect x="787" y="191" width="2" height="102" fill="#c8c8c8" />
<rect x="985" y="191" width="2" height="102" fill="#c8c8c8" />
<rect x="1523" y="191" width="2" height="102" fill="#c8c8c8" />
<rect x="1803" y="191" width="2" height="102" fill="#c8c8c8" />
<rect x="2009" y="191" width="2" height="102" fill="#c8c8c8" />
<rect x="2217" y="191" width="2" height="102" fill="#c8c8c8" />
<rect x="2375" y="191" width="2" height="102" fill="#c8c8c8" />
<rect x="2655" y="191" width="2" height="102" fill="#c8c8c8" />
</g>
<g id="toolbar">
<path d="M282.5 195.0H325.5M277.0 200.5V243.5M331.0 200.5V228.0M282.5 249.0H310.0" fill="none" stroke="#666" stroke-width="2" /><path d="M296.5 209.0H312.0M291.0 214.5V230.0M318.0 214.0C316.0 225.0 307.0 233.0 296.5 235.5" fill="none" stroke="#666" stroke-width="2" /><rect x="274" y="192" width="6" height="6" fill="#666" /><rect x="328" y="192" width="6" height="6" fill="#666" /><rect x="274" y="246" width="6" height="6" fill="#666" /><rect x="288" y="206" width="6" height="6" fill="#666" /><rect x="314" y="206" width="6" height="6" fill="#666" /><rect x="288" y="232" width="6" height="6" fill="#666" />
<path d="M320.0 228h8v10.0h10.0v8h-10.0v10.0h-8v-10.0h-10.0v-8h10.0Z" fill="#27b050" stroke="#1f9c45" stroke-width="1" />
<polygon points="362,204 374,192 410,192 398,204" fill="#8ccbfa" /><polygon points="398,204 410,192 410,234 398,246" fill="#4a96d0" /><rect x="362" y="204" width="36" height="42" fill="#6ab0e6" /><polygon points="362,246 398,246 410,234 410,236 398,248 362,248" fill="#fbfbfb" /><rect x="362" y="248" width="36" height="8" fill="#b2b2b2" /><polygon points="398,248 410,236 410,244 398,256" fill="#a4a4a4" /><path d="M417.0 201.0V244.0" fill="none" stroke="#222" stroke-width="2.0" /><polygon points="417,193 412,203 422,203" fill="#222" />
<path d="M505 206.800C498 199.500 487 196 477 196.300C466 196.600 456 200.500 450 206" fill="none" stroke="#222" stroke-width="2.2" />
<polygon points="446.5,209 449.5,200 457,206.5" fill="#222" />
<path d="M446 219C455 210 466 206 478 206C490 206 501 210 509 217L497.6 228.500C492 224 485 222 478 222C471 222 464 224.500 458 230Z" fill="#8ccbfa" />
<path d="M458 230C464 224.500 471 222 478 222C485 222 492 224 497.6 228.500L496 248C490 244 484 242.400 478 242.400C471 242.400 464 245 458 250Z" fill="#6ab0e6" />
<polygon points="446,219 458,230 458,250 446,238" fill="#4a96d0" />
<polygon points="498.5,230 509,219.5 509,237 498.5,248" fill="#f4f4f4" stroke="#666" stroke-width="2" stroke-linejoin="round"/>
<polygon points="533,204 545,192 596,192 584,204" fill="#f3f3f3" /><polygon points="584,204 596,192 596,243 584,255" fill="#b8b8b8" /><rect x="533" y="204" width="51" height="51" fill="#dadada" /><path d="M533 204L545 192H596V243L584 255H533Z" fill="none" stroke="#666" stroke-width="2" stroke-linejoin="round"/>
<path d="M533 204H584L596 192M584 204V255" fill="none" stroke="#666" stroke-width="0" />
<circle cx="559" cy="229" r="16" fill="#f4f4f4" stroke="#666" stroke-width="2"/>
<path d="M556 216.500a12.500 12.500 0 1 0 15.500 14.500a13 13 0 0 1-15.500-14.500Z" fill="#6ab0e6" stroke="#4a96d0" stroke-width="1" />
<path d="M634 203H658M625 212V236M634 245H658" fill="none" stroke="#666" stroke-width="2" />
<rect x="619" y="197" width="12" height="12" fill="#f6f6f6" stroke="#666" stroke-width="2" />
<rect x="660" y="196" width="14" height="14" fill="#6ab0e6" />
<rect x="618" y="238" width="14" height="14" fill="#6ab0e6" />
<rect x="660" y="238" width="14" height="14" fill="#6ab0e6" />
<path d="M704 224C704 208 716 196 732 196H742C756 196 764 206 764 222V232C764 246 752 256 740 256H724C712 256 704 248 704 238Z" fill="#d9c0fa" stroke="#8f63c8" stroke-width="1.5" />
<path d="M714 199.500H742C748 199.500 752 203 754 208H710C711 204 712 201 714 199.500Z" fill="#c6a0fc" />
<rect x="708" y="214" width="39" height="38" fill="#ab82e8" rx="9" />
<path d="M751 250L762 238V224L751 236Z" fill="#8f68d2" />
<path d="M705 230C718 234 736 234 748 231M728 200C725 210 726 240 728 254M748 231L763 217M752 251V236" fill="none" stroke="#8a68bd" stroke-width="1.5" opacity="0.8"/>
<polygon points="751,192.5 753.8,202.2 762.7,197.3 757.8,206.2 767.5,209 757.8,211.8 762.7,220.7 753.8,215.8 751,225.5 748.2,215.8 739.3,220.7 744.2,211.8 734.5,209 744.2,206.2 739.3,197.3 748.2,202.2" fill="#ffa800" stroke="#fff3cf" stroke-width="1.5" stroke-linejoin="round"/>
<path d="M857.500 204V207.200C866 208 874 213 879.600 221.600C880.500 227 879 232 877 236.500A10.800 10.800 0 1 0 893 236.500C891.500 232 893 226 899.800 220.300C904 217.500 909 216 914.500 215.500L905 204.500C900 210 894 212.500 889.700 212.100C880 211.500 873.500 206 871.200 196H867V204Z" fill="#4a98d3" />
<polygon points="881.5,217.2 891.6,217.4 885.6,229.4" fill="#f2f2f2" />
<circle cx="885" cy="245.200" r="8" fill="#f4f4f4" stroke="#666" stroke-width="2"/><circle cx="885" cy="245.200" r="3" fill="#f4f4f4" stroke="#666" stroke-width="1.800"/>
<rect x="857.3" y="193.2" width="11.5" height="11.5" fill="#f4f4f4" stroke="#666" stroke-width="2" />
<path d="M910.500 197.200L919 209L907.300 215.500C902.500 213.500 900.500 210 901.200 206Z" fill="#f4f4f4" stroke="#666" stroke-width="2" stroke-linejoin="round"/>
<polygon points="1013,205 1024,194 1036,194 1025,205" fill="#f3f3f3" />
<rect x="1013" y="205" width="11" height="50" fill="#dadada" />
<path d="M1036 193H1024L1013 204.500V255H1024" fill="none" stroke="#666" stroke-width="2" />
<polygon points="1026,204 1038,192 1056,192 1044,204" fill="#8ccbfa" /><polygon points="1044,204 1056,192 1056,244 1044,256" fill="#4a96d0" /><rect x="1026" y="204" width="18" height="52" fill="#6ab0e6" />
<rect x="1050" y="220" width="7" height="6.5" fill="#fbfbfb" />
<path d="M1052 223.200H1064" fill="none" stroke="#222" stroke-width="2.6" />
<polygon points="1070.5,223.2 1062,217.8 1062,228.6" fill="#222" />
<polygon points="1098,207 1112,193 1131,193 1119,206" fill="#f3f3f3" /><path d="M1098 208H1120C1135 209 1145 222 1145 238V255H1098Z" fill="#dadada" /><path d="M1119.500 205.500L1132 192.500C1148 195 1158.500 206 1160 219.500L1146.500 233C1145 218 1135 207.500 1119.500 205.500Z" fill="#6ab0e6" stroke="#5aa2dc" stroke-width="1" /><polygon points="1145,238.5 1159,224.5 1159,241 1145,255" fill="#b4b4b4" /><path d="M1130 193H1112L1097 208V255H1145L1159 241V225" fill="none" stroke="#666" stroke-width="2" stroke-linejoin="round"/>
<polygon points="1183,207 1197,193 1245,193 1231,207" fill="#f3f3f3" /><polygon points="1231,207 1245,193 1245,241 1231,255" fill="#b8b8b8" /><rect x="1183" y="207" width="48" height="48" fill="#dadada" /><path d="M1183 207L1197 193H1245V241L1231 255H1183Z" fill="none" stroke="#666" stroke-width="2" stroke-linejoin="round"/>
<rect x="1188" y="214" width="36" height="36" fill="#f8f8f8" />
<polygon points="1190,216 1206,216 1206,232 1190,248" fill="#4a96d0" />
<polygon points="1190,248 1206,232 1222,232 1222,248" fill="#8ccbfa" stroke="#6ab0e6" stroke-width="1" />
<polygon points="1288,200 1296,192 1332,192 1324,200" fill="#8ccbfa" /><polygon points="1324,200 1332,192 1332,228 1324,236" fill="#4a96d0" /><rect x="1288" y="200" width="36" height="36" fill="#6ab0e6" />
<polygon points="1268,220 1276,212 1288,212 1288,220" fill="#8ccbfa" />
<polygon points="1304,236 1312,236 1312,248 1304,256" fill="#4a96d0" />
<path d="M1268 220H1288V236H1304V256H1268Z" fill="#6ab0e6" />
<rect x="1288" y="200" width="36" height="36" fill="#6ab0e6" />
<polygon points="1358,204 1370,192 1414,192 1402,204" fill="#8ccbfa" /><polygon points="1402,204 1414,192 1414,212 1402,224" fill="#4a96d0" /><rect x="1358" y="204" width="44" height="20" fill="#6ab0e6" />
<polygon points="1358,234 1402,234 1414,222 1414,241 1402,253 1358,253" fill="#dadada" />
<polygon points="1402,234 1414,222 1414,241 1402,253" fill="#b8b8b8" />
<path d="M1359 234V253H1402L1414 241V226" fill="none" stroke="#666" stroke-width="2" stroke-linejoin="round"/>
<path d="M1354 229H1402.500L1418 213.500" fill="none" stroke="#0a84d8" stroke-width="2.2" />
<path d="M1472 205V243M1453 224H1491" fill="none" stroke="#333" stroke-width="4.5" /><polygon points="1472,192 1462,208 1482,208" fill="#333" /><polygon points="1472,256 1462,240 1482,240" fill="#333" /><polygon points="1440.5,224 1456.5,214 1456.5,234" fill="#333" /><polygon points="1503.5,224 1487.5,214 1487.5,234" fill="#333" />
<rect x="1549" y="232" width="24" height="23" fill="#dadada" stroke="#666" stroke-width="2" />
<polygon points="1573,232 1581,224 1604,224 1596,232" fill="#f4f4f4" /><polygon points="1596,232 1604,224 1604,247 1596,255" fill="#b8b8b8" /><rect x="1573" y="232" width="23" height="23" fill="#dadada" /><path d="M1573 232L1581 224H1604V247L1596 255H1573Z" fill="none" stroke="#666" stroke-width="2" stroke-linejoin="round"/>
<polygon points="1548,208 1556,200 1580,200 1572,208" fill="#8ccbfa" /><polygon points="1572,208 1580,200 1580,224 1572,232" fill="#4a96d0" /><rect x="1548" y="208" width="24" height="24" fill="#6ab0e6" />
<polygon points="1595,192 1597.9,202 1607,197 1602,206.1 1612,209 1602,211.9 1607,221 1597.9,216 1595,226 1592.1,216 1583,221 1588,211.9 1578,209 1588,206.1 1583,197 1592.1,202" fill="#ffa800" stroke="#fff3cf" stroke-width="1.5" stroke-linejoin="round"/>
<path d="M1639 212L1653 198.500C1656 196 1662 196 1664 199V218C1662 222 1657 222 1653 220V238L1641 250L1639 248Z" fill="#c2c2c2" stroke="#666" stroke-width="2" stroke-linejoin="round"/>
<path d="M1653 199V220C1657 222 1662 222 1664 218V200C1661 203 1656 203 1653 199Z" fill="#e0e0e0" />
<ellipse cx="1658.500" cy="200" rx="3.200" ry="1.800" fill="#666"/>
<path d="M1657.500 222V232" fill="none" stroke="#0a84d8" stroke-width="2.2" />
<path d="M1680 204L1682 201L1693 212V250L1690 252L1680 240Z" fill="#dcdcdc" stroke="#666" stroke-width="2" stroke-linejoin="round"/>
<path d="M1669 220C1669 214 1680 214 1680 219V236C1680 240 1669 240 1669 235Z" fill="#bdbdbd" stroke="#666" stroke-width="2" />
<ellipse cx="1674.500" cy="218.500" rx="5" ry="2.500" fill="#e4e4e4" stroke="#666" stroke-width="1.500"/>
<path d="M1675 208V219" fill="none" stroke="#0a84d8" stroke-width="2.2" />
<rect x="1721" y="205" width="12" height="12" fill="#f6f6f6" stroke="#666" stroke-width="2" />
<rect x="1733" y="205" width="12" height="12" fill="#f6f6f6" stroke="#666" stroke-width="2" />
<rect x="1720.5" y="192.5" width="13" height="13" fill="#6ab0e6" stroke="#4a96d0" stroke-width="1.4" />
<path d="M1731 220V252M1731 227H1746M1731 237H1746M1731 247H1746" fill="none" stroke="#8a8a8a" stroke-width="2" />
<rect x="1751" y="209" width="32" height="46" fill="#fbfbfb" stroke="#666" stroke-width="2" />
<rect x="1750" y="208" width="34" height="8" fill="#666" />
<rect x="1753" y="211.5" width="4" height="2" fill="#f2f2f2" />
<path d="M1761 216V255M1751 226H1783M1751 236H1783M1751 246H1783" fill="none" stroke="#8a8a8a" stroke-width="2" />
<polygon points="1834.5,206 1848,192.5 1889.5,192.5 1876,206" fill="#f3f3f3" /><polygon points="1876,206 1889.5,192.5 1889.5,234.5 1876,248" fill="#b8b8b8" /><rect x="1834.5" y="206" width="41.5" height="42" fill="#dadada" /><path d="M1834.5 206L1848.0 192.5H1889.5V234.5L1876.0 248H1834.5Z" fill="none" stroke="#8c8c8c" stroke-width="1.2" stroke-linejoin="round"/>
<rect x="1869" y="230" width="30" height="28" fill="#f2f2f2" /><path d="M1870 238H1898M1870 250H1898" fill="none" stroke="#666" stroke-width="4" /><rect x="1888" y="244" width="4" height="12" fill="#666" /><rect x="1876" y="232" width="4" height="12" fill="#1a8ee6" />
<rect x="1921" y="193" width="58" height="56" fill="#f6f6f6" stroke="#666" stroke-width="2" />
<rect x="1920" y="192" width="60" height="12" fill="#666" />
<rect x="1924" y="196" width="8" height="4" fill="#f2f2f2" />
<rect x="1927" y="211" width="46" height="30" fill="none" stroke="#666" stroke-width="2" />
<path d="M1937 211V241M1947 211V241M1927 221H1973M1927 231H1973" fill="none" stroke="#666" stroke-width="2" />
<rect x="1955" y="230" width="30" height="28" fill="#f2f2f2" /><path d="M1956 238H1984M1956 250H1984" fill="none" stroke="#666" stroke-width="4" /><rect x="1974" y="244" width="4" height="12" fill="#666" /><rect x="1962" y="232" width="4" height="12" fill="#1a8ee6" />
<polygon points="2087,210 2104,193 2118,193 2102,210" fill="#f3f3f3" />
<rect x="2087" y="210" width="15" height="43" fill="#dadada" />
<path d="M2118 193H2104.500L2087 210.500V253H2102" fill="none" stroke="#666" stroke-width="2" />
<polygon points="2104,210 2122,192 2122,235 2104,253.5" fill="#5bc682" stroke="#4db474" stroke-width="1" />
<polygon points="2128,210 2146,192 2146,235 2128,253.5" fill="#e89b65" stroke="#d98a55" stroke-width="1" />
<rect x="2270.5" y="228.5" width="55" height="11" fill="#ffa800" stroke="#e89600" stroke-width="1.4" />
<path d="M2273 229V232M2279 229V234M2285 229V232M2291 229V234M2297 229V232M2303 229V234M2309 229V232M2315 229V234M2321 229V232" fill="none" stroke="#7a6a3a" stroke-width="1.4" />
<path d="M2271 208V226M2325 208V226M2277 217H2319" fill="none" stroke="#666" stroke-width="1.8" />
<polygon points="2272.5,217 2280,212.5 2280,221.5" fill="#666" />
<polygon points="2323.5,217 2316,212.5 2316,221.5" fill="#666" />
<polygon points="2409,216 2424.5,200.5 2459.5,200.5 2444,216" fill="#f3f3f3" /><polygon points="2444,216 2459.5,200.5 2459.5,235.5 2444,251" fill="#b8b8b8" /><rect x="2409" y="216" width="35" height="35" fill="#dadada" /><path d="M2409 216L2424.5 200.5H2459.5V235.5L2444 251H2409Z" fill="none" stroke="#666" stroke-width="1.6" stroke-linejoin="round"/>
<path d="M2400 200H2417V192.500L2435.500 204L2417 215.500V208H2400Z" fill="#1a8ee6" />
<path d="M2441 246L2449 238a5 5 0 0 1 7 7L2452 249M2453 236L2457 232a5 5 0 0 0-7-7L2442 233" fill="none" stroke="#333" stroke-width="0" />
<g fill="none" stroke="#333" stroke-width="4.200"><rect x="2434" y="238" width="17" height="10" rx="5" transform="rotate(-38 2442.500 243)"/><rect x="2445" y="229.500" width="17" height="10" rx="5" transform="rotate(-38 2453.500 234.500)"/></g>
<path d="M2491 196L2493 194H2536L2538 196V208L2536 210H2493L2491 208Z" fill="#8ccbfa" stroke="#5aa2dc" stroke-width="1" />
<rect x="2502" y="194.5" width="22" height="15" fill="#6ab0e6" />
<rect x="2524" y="194.5" width="13.5" height="15" fill="#4a96d0" />
<rect x="2503" y="210" width="20" height="8" fill="#8ccbfa" stroke="#5aa2dc" stroke-width="1" />
<rect x="2500" y="218" width="28" height="37" fill="#8ccbfa" stroke="#5aa2dc" stroke-width="1" rx="2" />
<path d="M2500 220.0L2528 221.5M2500 224.3L2528 225.8M2500 228.6L2528 230.1M2500 232.9L2528 234.4M2500 237.2L2528 238.7M2500 241.5L2528 243.0M2500 245.8L2528 247.3M2500 250.1L2528 251.6M2500 254.4L2528 255.9" fill="none" stroke="#5a9fd8" stroke-width="1.5" />
<path d="M2532.0 228h8v10.0h10.0v8h-10.0v10.0h-8v-10.0h-10.0v-8h10.0Z" fill="#27b050" stroke="#1f9c45" stroke-width="1" />
<rect x="2574.5" y="194.5" width="57" height="57" fill="#8ccbfa" stroke="#4a96d0" stroke-width="1.6" />
<path d="M2575 231C2580 222 2586 218 2591 218C2598 218 2604 232 2611 238C2614 234 2618 230 2622 230C2626 230 2629 234 2631 239V251H2575Z" fill="#4090cc" />
<circle cx="2615.700" cy="210" r="6.200" fill="#ffffd0" stroke="#a8d4f5" stroke-width="1"/>
<rect x="2694" y="186" width="76" height="76" fill="#0696d7" />
<rect x="2701.5" y="193.5" width="54" height="41.5" fill="none" stroke="#86e086" stroke-width="2" stroke-dasharray="8.500 4"/>
<path d="M2742 220.500L2742 252L2749 245.500L2754.500 257L2760 254.500L2754.500 243L2764 242.500Z" fill="#fff" />
</g>
<g id="browser">
<rect x="9" y="317" width="597" height="46.5" fill="#f2f2f2" stroke="#c9c9c9" stroke-width="2" />
<path d="M8 364.5H607" fill="none" stroke="#bdbdbd" stroke-width="1.4" />
<polygon points="18,341 28,335 28,347" fill="#333" />
<polygon points="27.5,341 37.5,335 37.5,347" fill="#333" />
<text x="59.3" y="348" font-size="22.6" fill="#5a5a5a" textLength="98.1" lengthAdjust="spacingAndGlyphs" stroke="#5a5a5a" stroke-width="0.3">BROWSER</text>
<circle cx="575" cy="341" r="8" fill="#2b2b2b"/>
<rect x="569.5" y="339.2" width="11" height="3.6" fill="#9a9a9a" rx="1" />
<rect x="80" y="376" width="424" height="40" fill="#f1f1f1" />
<defs><linearGradient id="exg" x1="0" y1="0" x2="1" y2="1"><stop offset="0.35" stop-color="#e8e8e8"/><stop offset="1" stop-color="#000"/></linearGradient></defs>
<polygon points="46,402 58.5,402 58.5,390" fill="url(#exg)" stroke="#000" stroke-width="1.6" stroke-linejoin="round"/>
<path d="M86 396C93 383 111 383 118 396C111 409 93 409 86 396Z" fill="#999" /><circle cx="102" cy="396" r="6.500" fill="#f0f0f0"/><circle cx="102" cy="396" r="3" fill="#999"/><circle cx="102" cy="396" r="4.600" fill="none" stroke="#f0f0f0" stroke-width="3"/>
<rect x="130" y="380" width="324" height="32" fill="#999" />
<polygon points="139,385.2 142.6,381.6 153.6,381.6 150,385.2" fill="#f1f2f6" stroke="#fbfbfc" stroke-width="1.1" stroke-linejoin="round"/><polygon points="150,385.2 153.6,381.6 153.6,393.1 150,396.7" fill="#b7bbc8" stroke="#fbfbfc" stroke-width="1.1" stroke-linejoin="round"/><rect x="139" y="385.2" width="11" height="11.5" fill="#dfe2ea" stroke="#fbfbfc" stroke-width="1.1" />
<polygon points="139,396.7 142.6,393.1 153.6,393.1 150,396.7" fill="#f1f2f6" stroke="#fbfbfc" stroke-width="1.1" stroke-linejoin="round"/><polygon points="150,396.7 153.6,393.1 153.6,404.6 150,408.2" fill="#b7bbc8" stroke="#fbfbfc" stroke-width="1.1" stroke-linejoin="round"/><rect x="139" y="396.7" width="11" height="11.5" fill="#dfe2ea" stroke="#fbfbfc" stroke-width="1.1" />
<polygon points="150,397 153.6,393.4 165.4,393.4 161.8,397" fill="#f1f2f6" stroke="#fbfbfc" stroke-width="1.1" stroke-linejoin="round"/><polygon points="161.8,397 165.4,393.4 165.4,404.6 161.8,408.2" fill="#b7bbc8" stroke="#fbfbfc" stroke-width="1.1" stroke-linejoin="round"/><rect x="150" y="397" width="11.8" height="11.2" fill="#dfe2ea" stroke="#fbfbfc" stroke-width="1.1" />
<text x="197" y="403.8" font-size="23" fill="#fff" textLength="236.8" lengthAdjust="spacingAndGlyphs" font-weight="bold" >paintbrush holder v8</text>
<defs><radialGradient id="rdg" cx="40%" cy="35%" r="70%"><stop offset="0" stop-color="#fff"/><stop offset="1" stop-color="#c4c8d4"/></radialGradient></defs>
<circle cx="476" cy="395" r="12.500" fill="url(#rdg)" stroke="#555" stroke-width="1.600"/><circle cx="476" cy="395" r="5" fill="#2a2a2a"/>
<rect x="116" y="424" width="284" height="40" fill="#f1f1f1" />
<path d="M83 436H86L93.5 444L86 452H83Z" fill="#fff" stroke="#111" stroke-width="1.35" stroke-linejoin="round"/>
<polygon points="148.02,442.33 148.02,446.67 144.5,446.78 143.33,449.6 145.74,452.17 142.67,455.24 140.1,452.83 137.28,454 137.17,457.52 132.83,457.52 132.72,454 129.9,452.83 127.33,455.24 124.26,452.17 126.67,449.6 125.5,446.78 121.98,446.67 121.98,442.33 125.5,442.22 126.67,439.4 124.26,436.83 127.33,433.76 129.9,436.17 132.72,435 132.83,431.48 137.17,431.48 137.28,435 140.1,436.17 142.67,433.76 145.74,436.83 143.33,439.4 144.5,442.22" fill="#808080" stroke="#808080" stroke-width="1" stroke-linejoin="round"/><circle cx="135" cy="444.5" r="5.2" fill="#f1f1f1"/>
<text x="175" y="451.8" font-size="23" fill="#333" textLength="200" lengthAdjust="spacingAndGlyphs" stroke="#333" stroke-width="0.4">Document Settings</text>
<rect x="116" y="472" width="228" height="40" fill="#f1f1f1" />
<path d="M83 484H86L93.5 492L86 500H83Z" fill="#fff" stroke="#111" stroke-width="1.35" stroke-linejoin="round"/>
<path d="M122 481.0a1.500 1.500 0 0 1 1.500-1.500H134l3 3.500H154V505.0H122Z" fill="#999" /><path d="M122 485.0H154" fill="none" stroke="#f2f2f2" stroke-width="0.01" /><path d="M122.5 484.0H136.5" fill="none" stroke="#c9c9c9" stroke-width="1" />
<text x="183" y="499.8" font-size="23" fill="#333" textLength="140.5" lengthAdjust="spacingAndGlyphs" stroke="#333" stroke-width="0.4">Named Views</text>
<rect x="116" y="520" width="206" height="40" fill="#f1f1f1" />
<path d="M83 532H86L93.5 540L86 548H83Z" fill="#fff" stroke="#111" stroke-width="1.35" stroke-linejoin="round"/>
<path d="M122 540C129 527 147 527 154 540C147 553 129 553 122 540Z" fill="#999" /><circle cx="138" cy="540" r="6.500" fill="#f0f0f0"/><circle cx="138" cy="540" r="3" fill="#999"/><circle cx="138" cy="540" r="4.600" fill="none" stroke="#f0f0f0" stroke-width="3"/>
<path d="M172 529.0a1.500 1.500 0 0 1 1.500-1.500H184l3 3.500H204V553.0H172Z" fill="#999" /><path d="M172 533.0H204" fill="none" stroke="#f2f2f2" stroke-width="0.01" /><path d="M172.5 532.0H186.5" fill="none" stroke="#c9c9c9" stroke-width="1" />
<text x="232.4" y="547.8" font-size="23" fill="#333" textLength="64.6" lengthAdjust="spacingAndGlyphs" stroke="#333" stroke-width="0.4">Origin</text>
<rect x="116" y="568" width="206" height="40" fill="#f1f1f1" />
<path d="M83 580H86L93.5 588L86 596H83Z" fill="#fff" stroke="#111" stroke-width="1.35" stroke-linejoin="round"/>
<path d="M122 588C129 575 147 575 154 588C147 601 129 601 122 588Z" fill="#999" /><circle cx="138" cy="588" r="6.500" fill="#f0f0f0"/><circle cx="138" cy="588" r="3" fill="#999"/><circle cx="138" cy="588" r="4.600" fill="none" stroke="#f0f0f0" stroke-width="3"/>
<path d="M172 577.0a1.500 1.500 0 0 1 1.500-1.500H184l3 3.500H204V601.0H172Z" fill="#999" /><path d="M172 581.0H204" fill="none" stroke="#f2f2f2" stroke-width="0.01" /><path d="M172.5 580.0H186.5" fill="none" stroke="#c9c9c9" stroke-width="1" />
<text x="232.4" y="595.8" font-size="23" fill="#333" textLength="68.2" lengthAdjust="spacingAndGlyphs" stroke="#333" stroke-width="0.4">Bodies</text>
<rect x="116" y="616" width="230" height="40" fill="#f1f1f1" />
<path d="M83 628H86L93.5 636L86 644H83Z" fill="#fff" stroke="#111" stroke-width="1.35" stroke-linejoin="round"/>
<path d="M123 636C130 624.5 146 624.5 153 636C146 647.5 130 647.5 123 636Z" fill="none" stroke="#999" stroke-width="2" /><circle cx="138" cy="636" r="5" fill="none" stroke="#999" stroke-width="2"/><path d="M128 627L147 647" fill="none" stroke="#f2f2f2" stroke-width="5" /><path d="M127 626L147 647" fill="none" stroke="#999" stroke-width="2" />
<path d="M172 625.0a1.500 1.500 0 0 1 1.500-1.500H184l3 3.500H204V649.0H172Z" fill="#999" /><path d="M172 629.0H204" fill="none" stroke="#f2f2f2" stroke-width="0.01" /><path d="M172.5 628.0H186.5" fill="none" stroke="#c9c9c9" stroke-width="1" />
<text x="232.4" y="643.8" font-size="23" fill="#333" textLength="91.6" lengthAdjust="spacingAndGlyphs" stroke="#333" stroke-width="0.4">Sketches</text>
<rect x="116" y="664" width="294" height="40" fill="#f1f1f1" />
<path d="M83 676H86L93.5 684L86 692H83Z" fill="#fff" stroke="#111" stroke-width="1.35" stroke-linejoin="round"/>
<path d="M122 684C129 671 147 671 154 684C147 697 129 697 122 684Z" fill="#999" /><circle cx="138" cy="684" r="6.500" fill="#f0f0f0"/><circle cx="138" cy="684" r="3" fill="#999"/><circle cx="138" cy="684" r="4.600" fill="none" stroke="#f0f0f0" stroke-width="3"/>
<path d="M172 682.2C173 677 178 671.5 183 670.2C186 671 188 676.5 190.6 677.7C194 679 198 678.5 201.7 678.2L194.7 685.5C191 685.5 188 685 185.6 683.8C184 683 183 682 182 681.7Z" fill="#8ccbfa" stroke="#5aa2dc" stroke-width="1" /><path d="M172 682.2C173 678 177 674 180.5 678.2L182 681.7L173 687.8Z" fill="#4a96d0" /><path d="M173 689.3L181.3 682.4V687.8L173 697Z" fill="#f6f6f6" stroke="#555" stroke-width="1.5" stroke-linejoin="round"/>
<path d="M196.5 687.5V697.0M193.0 690.5H200.0M190.5 692.5C191.0 696.0 193.5 697.5 196.5 697.5C199.5 697.5 202.0 696.0 202.5 692.5" fill="none" stroke="#222" stroke-width="1.8" />
<circle cx="196.5" cy="686.0" r="1.800" fill="none" stroke="#222" stroke-width="1.400"/>
<text x="232.4" y="691.8" font-size="23" fill="#333" textLength="157.3" lengthAdjust="spacingAndGlyphs" stroke="#333" stroke-width="0.4">Component1:1</text>
</g>
<g id="bottom">
<rect x="9" y="1806" width="597" height="47.5" fill="#f2f2f2" />
<path d="M9 1806V1853.500H606V1806" fill="none" stroke="#c9c9c9" stroke-width="2" />
<path d="M8 1855H607" fill="none" stroke="#bdbdbd" stroke-width="1.4" />
<text x="58.6" y="1838.4" font-size="22.8" fill="#5a5a5a" textLength="123" lengthAdjust="spacingAndGlyphs" stroke="#5a5a5a" stroke-width="0.3">COMMENTS</text>
<rect x="567" y="1823" width="16" height="16" fill="#262626" rx="5.5" />
<path d="M570.500 1831H579.500M575 1826.500V1835.500" fill="none" stroke="#c4c4c4" stroke-width="1.8" />
<rect x="1276" y="1804.2" width="474" height="47.6" fill="#f2f2f2" />
<polygon points="1324,1824 1336,1824 1330,1831.5" fill="#222" /><polygon points="1546,1824 1558,1824 1552,1831.5" fill="#222" /><polygon points="1606,1824 1618,1824 1612,1831.5" fill="#222" /><polygon points="1668,1824 1680,1824 1674,1831.5" fill="#222" /><polygon points="1730,1824 1742,1824 1736,1831.5" fill="#222" /><defs><linearGradient id="nvg" x1="0" y1="0" x2="1" y2="0"><stop offset="0" stop-color="#f8f9fb"/><stop offset="1" stop-color="#c2c7d2"/></linearGradient><radialGradient id="lens" cx="40%" cy="35%" r="70%"><stop offset="0" stop-color="#ffffff"/><stop offset="1" stop-color="#cfe0dc"/></radialGradient></defs><ellipse cx="1298" cy="1829" rx="13.500" ry="5" fill="none" stroke="#333" stroke-width="1.600"/><path d="M1295.500 1841.500V1822H1291.500L1298.300 1812L1305 1822H1301V1841.500Z" fill="url(#nvg)" stroke="#4a4a4a" stroke-width="1.3" /><polygon points="1287,1832.5 1292,1830 1291.5,1836" fill="#333" /><path d="M1352 1822L1358 1816V1821L1370 1817V1822" fill="#d6d9e0" stroke="#4a4a4a" stroke-width="1.3" /><rect x="1350.7" y="1822" width="27" height="18.5" fill="#eceef2" stroke="#4a4a4a" stroke-width="1.4" rx="1.5" /><rect x="1355" y="1826.5" width="18.5" height="9.5" fill="#a9aebb" stroke="#4a4a4a" stroke-width="1.2" /><path d="M1409 1841.500C1406 1836 1403 1832 1401.500 1829.500C1400.500 1827.500 1403 1826 1405 1827.500L1409.500 1832V1817.500C1409.500 1815 1413 1815 1413.200 1817.500V1814C1413.500 1811.500 1417 1811.500 1417.200 1814V1815.500C1417.500 1813 1421 1813 1421.200 1815.500V1819C1421.500 1816.500 1425 1817 1425 1819.500L1430.500 1822C1431 1828 1428 1835 1424 1841.500Z" fill="#fbfbfb" stroke="#4a4a4a" stroke-width="1.3" stroke-linejoin="round"/><path d="M1413.200 1817.500V1828M1417.200 1815.500V1828M1421.200 1819V1828" fill="none" stroke="#4a4a4a" stroke-width="1.1" /><path d="M1470.6 1830.3L1481.6 1839.8" fill="none" stroke="#222" stroke-width="4.2" stroke-linecap="round"/><circle cx="1463.6" cy="1822.8" r="10.200" fill="url(#lens)" stroke="#333" stroke-width="1.600"/><path d="M1476.500 1815.500H1483M1479.700 1812.500V1818.500M1476.500 1821.500H1483" fill="none" stroke="#333" stroke-width="1.3" /><rect x="1505.5" y="1813.5" width="29" height="28.5" fill="#ececec" stroke="#555" stroke-width="1.1" stroke-dasharray="3.500 2.500"/><path d="M1523 1832.0L1534 1841.5" fill="none" stroke="#222" stroke-width="4.2" stroke-linecap="round"/><circle cx="1516" cy="1824.5" r="10.200" fill="url(#lens)" stroke="#333" stroke-width="1.600"/><rect x="1571.5" y="1812.3" width="29" height="22.5" fill="#f6f6f6" stroke="#4a4a4a" stroke-width="1.3" rx="1.5" /><rect x="1575" y="1815.5" width="22" height="16" fill="#8fb0e0" stroke="#3c5fa0" stroke-width="1.3" /><path d="M1582.500 1835H1590V1838.500H1594.500V1841.500H1578V1838.500H1582.500Z" fill="#d6d9e0" stroke="#4a4a4a" stroke-width="1.1" /><defs><linearGradient id="grg" x1="0" y1="0" x2="0" y2="1"><stop offset="0" stop-color="#ffffff"/><stop offset="1" stop-color="#8c8f99"/></linearGradient></defs><rect x="1633.5" y="1813.8" width="28" height="28" fill="url(#grg)" stroke="#333" stroke-width="1.4" /><path d="M1637.5 1814V1841.500M1634 1817.8H1661M1641.5 1814V1841.500M1634 1821.8H1661M1645.5 1814V1841.500M1634 1825.8H1661M1649.5 1814V1841.500M1634 1829.8H1661M1653.5 1814V1841.500M1634 1833.8H1661M1657.5 1814V1841.500M1634 1837.8H1661" fill="none" stroke="#555" stroke-width="1" /><rect x="1695.7" y="1815.2" width="13.6" height="11.5" fill="#8fb0e0" stroke="#2f4f90" stroke-width="1.4" /><rect x="1697.5" y="1817" width="10" height="8" fill="#a4c0e8" /><rect x="1711.2" y="1815.2" width="13.6" height="11.5" fill="#8fb0e0" stroke="#2f4f90" stroke-width="1.4" /><rect x="1713" y="1817" width="10" height="8" fill="#a4c0e8" /><rect x="1695.7" y="1828.4" width="13.6" height="11.5" fill="#8fb0e0" stroke="#2f4f90" stroke-width="1.4" /><rect x="1697.5" y="1830.2" width="10" height="8" fill="#a4c0e8" /><rect x="1711.2" y="1828.4" width="13.6" height="11.5" fill="#8fb0e0" stroke="#2f4f90" stroke-width="1.4" /><rect x="1713" y="1830.2" width="10" height="8" fill="#a4c0e8" />
<path d="M2983 1820.500a16 16 0 1 0 0 32H2995a4 4 0 0 0 4-4V1836.500a16 16 0 0 0-16-16Z" fill="#0a0a0a" />
<path d="M2975 1838L2989 1829M2976 1842L2990 1833M2979 1845L2991 1837.500" fill="none" stroke="#fff" stroke-width="1.7" />
<rect x="0" y="1864" width="3024" height="100" fill="#f2f2f2" />
<rect x="0" y="1864" width="3024" height="4.5" fill="#c8c8c8" />
<rect x="0" y="1864" width="270" height="6" fill="#c8c8c8" />
<rect x="2934" y="1864" width="90" height="6" fill="#c8c8c8" />
<rect x="22" y="1906" width="4" height="24" fill="#666" />
<polygon points="26,1918 44,1906 44,1930" fill="#666" />
<polygon points="70.5,1918 90,1905.5 90,1930.5" fill="#666" />
<rect x="92" y="1913.5" width="4" height="10" fill="#666" />
<polygon points="122,1902.5 146,1917 122,1931.5" fill="#666" />
<rect x="170" y="1913.5" width="4" height="10" fill="#666" />
<polygon points="195.5,1918 176,1905.5 176,1930.5" fill="#666" />
<polygon points="239.5,1918 222,1906 222,1930" fill="#666" />
<rect x="239.5" y="1906" width="4.5" height="24" fill="#666" />
<defs><linearGradient id="rmg" x1="0" y1="0" x2="0" y2="1"><stop offset="0" stop-color="#e8f4fa"/><stop offset="1" stop-color="#b4d6ea"/></linearGradient></defs>
<defs><filter id="blr" x="-20%" y="-20%" width="140%" height="140%"><feGaussianBlur stdDeviation="0.800"/></filter></defs>
<path d="M296.0 1901.8H316.8M296.0 1928.0H307.90000000000003" fill="none" stroke="#a6a6a6" stroke-width="2.2" /><path d="M293.5 1904.5V1925.6999999999998M319.5 1904.5V1915.3" fill="none" stroke="#666" stroke-width="1.3" /><path d="M303.0 1908.5H310.1M300.3 1911.5V1919.1" fill="none" stroke="#7a7a7a" stroke-width="1.4" /><path d="M313.0 1911.5C311.3 1916.6 307.8 1920.1 302.90000000000003 1921.6" fill="none" stroke="#555" stroke-width="1.3" /><rect x="291.8" y="1900.1" width="3.4" height="3.4" fill="#1a8ee6" /><rect x="317.8" y="1900.1" width="3.4" height="3.4" fill="#1a8ee6" /><rect x="291.8" y="1926.5" width="3.4" height="3.4" fill="#1a8ee6" /><rect x="298.7" y="1907.2" width="3.4" height="3.4" fill="#1a8ee6" /><rect x="311.1" y="1907.2" width="3.4" height="3.4" fill="#1a8ee6" /><rect x="298.7" y="1920" width="3.4" height="3.4" fill="#1a8ee6" /><g transform="translate(308.2 1931) rotate(-43.5)"><polygon points="0,0 4.600,-2.500 4.600,2.500" fill="#666"/><polygon points="5.300,-3 14.300,-3 14.300,3.100 5.300,3.100" fill="#fcc24a"/><path d="M15.200 -3h1.500a3.050 3.050 0 0 1 0 6.100h-1.500z" fill="#ff3030"/></g>
<rect x="308" y="1938" width="4" height="10" fill="#c8c8c8" />
<polygon points="341,1906.1 347,1900.1 365,1900.1 359,1906.1" fill="#8ccbfa" /><polygon points="359,1906.1 365,1900.1 365,1921.1 359,1927.1" fill="#4a96d0" /><rect x="341" y="1906.1" width="18" height="21" fill="#6ab0e6" /><polygon points="341,1927.1 359,1927.1 365,1921.1 365,1922.1 359,1928.1 341,1928.1" fill="#fbfbfb" /><rect x="341" y="1928.1" width="18" height="4" fill="#b2b2b2" /><polygon points="359,1928.1 365,1922.1 365,1926.1 359,1932.1" fill="#a4a4a4" /><path d="M368.5 1904.6V1926.1" fill="none" stroke="#222" stroke-width="1.2" /><polygon points="368.5,1900.6 366,1905.6 371,1905.6" fill="#222" />
<rect x="354" y="1938" width="4" height="10" fill="#c8c8c8" />
<path d="M392.0 1901.8H412.8M392.0 1928.0H403.90000000000003" fill="none" stroke="#a6a6a6" stroke-width="2.2" /><path d="M389.5 1904.5V1925.6999999999998M415.5 1904.5V1915.3" fill="none" stroke="#666" stroke-width="1.3" /><path d="M399.0 1908.5H406.1M396.3 1911.5V1919.1" fill="none" stroke="#7a7a7a" stroke-width="1.4" /><path d="M409.0 1911.5C407.3 1916.6 403.8 1920.1 398.90000000000003 1921.6" fill="none" stroke="#555" stroke-width="1.3" /><rect x="387.8" y="1900.1" width="3.4" height="3.4" fill="#1a8ee6" /><rect x="413.8" y="1900.1" width="3.4" height="3.4" fill="#1a8ee6" /><rect x="387.8" y="1926.5" width="3.4" height="3.4" fill="#1a8ee6" /><rect x="394.7" y="1907.2" width="3.4" height="3.4" fill="#1a8ee6" /><rect x="407.1" y="1907.2" width="3.4" height="3.4" fill="#1a8ee6" /><rect x="394.7" y="1920" width="3.4" height="3.4" fill="#1a8ee6" /><g transform="translate(404.2 1931) rotate(-43.5)"><polygon points="0,0 4.600,-2.500 4.600,2.500" fill="#666"/><polygon points="5.300,-3 14.300,-3 14.300,3.100 5.300,3.100" fill="#fcc24a"/><path d="M15.200 -3h1.500a3.050 3.050 0 0 1 0 6.100h-1.500z" fill="#ff3030"/></g>
<rect x="402" y="1938" width="4" height="10" fill="#c8c8c8" />
<polygon points="437,1906.1 443,1900.1 461,1900.1 455,1906.1" fill="#8ccbfa" /><polygon points="455,1906.1 461,1900.1 461,1921.1 455,1927.1" fill="#4a96d0" /><rect x="437" y="1906.1" width="18" height="21" fill="#6ab0e6" /><polygon points="437,1927.1 455,1927.1 461,1921.1 461,1922.1 455,1928.1 437,1928.1" fill="#fbfbfb" /><rect x="437" y="1928.1" width="18" height="4" fill="#b2b2b2" /><polygon points="455,1928.1 461,1922.1 461,1926.1 455,1932.1" fill="#a4a4a4" /><path d="M464.5 1904.6V1926.1" fill="none" stroke="#222" stroke-width="1.2" /><polygon points="464.5,1900.6 462,1905.6 467,1905.6" fill="#222" />
<rect x="450" y="1938" width="4" height="10" fill="#c8c8c8" />
<polygon points="485,1906.1 491,1900.1 509,1900.1 503,1906.1" fill="#8ccbfa" /><polygon points="503,1906.1 509,1900.1 509,1921.1 503,1927.1" fill="#4a96d0" /><rect x="485" y="1906.1" width="18" height="21" fill="#6ab0e6" /><polygon points="485,1927.1 503,1927.1 509,1921.1 509,1922.1 503,1928.1 485,1928.1" fill="#fbfbfb" /><rect x="485" y="1928.1" width="18" height="4" fill="#b2b2b2" /><polygon points="503,1928.1 509,1922.1 509,1926.1 503,1932.1" fill="#a4a4a4" /><path d="M512.5 1904.6V1926.1" fill="none" stroke="#222" stroke-width="1.2" /><polygon points="512.5,1900.6 510,1905.6 515,1905.6" fill="#222" />
<rect x="498" y="1938" width="4" height="10" fill="#c8c8c8" />
<path d="M536.0 1901.8H556.8M536.0 1928.0H547.9" fill="none" stroke="#a6a6a6" stroke-width="2.2" /><path d="M533.5 1904.5V1925.6999999999998M559.5 1904.5V1915.3" fill="none" stroke="#666" stroke-width="1.3" /><path d="M543.0 1908.5H550.0999999999999M540.3 1911.5V1919.1" fill="none" stroke="#7a7a7a" stroke-width="1.4" /><path d="M553.0 1911.5C551.3 1916.6 547.8 1920.1 542.9 1921.6" fill="none" stroke="#555" stroke-width="1.3" /><rect x="531.8" y="1900.1" width="3.4" height="3.4" fill="#1a8ee6" /><rect x="557.8" y="1900.1" width="3.4" height="3.4" fill="#1a8ee6" /><rect x="531.8" y="1926.5" width="3.4" height="3.4" fill="#1a8ee6" /><rect x="538.7" y="1907.2" width="3.4" height="3.4" fill="#1a8ee6" /><rect x="551.1" y="1907.2" width="3.4" height="3.4" fill="#1a8ee6" /><rect x="538.7" y="1920" width="3.4" height="3.4" fill="#1a8ee6" /><g transform="translate(548.2 1931) rotate(-43.5)"><polygon points="0,0 4.600,-2.500 4.600,2.500" fill="#666"/><polygon points="5.300,-3 14.300,-3 14.300,3.100 5.300,3.100" fill="#fcc24a"/><path d="M15.200 -3h1.500a3.050 3.050 0 0 1 0 6.100h-1.500z" fill="#ff3030"/></g>
<rect x="546" y="1938" width="4" height="10" fill="#c8c8c8" />
<polygon points="581,1906.1 587,1900.1 605,1900.1 599,1906.1" fill="#8ccbfa" /><polygon points="599,1906.1 605,1900.1 605,1921.1 599,1927.1" fill="#4a96d0" /><rect x="581" y="1906.1" width="18" height="21" fill="#6ab0e6" /><polygon points="581,1927.1 599,1927.1 605,1921.1 605,1922.1 599,1928.1 581,1928.1" fill="#fbfbfb" /><rect x="581" y="1928.1" width="18" height="4" fill="#b2b2b2" /><polygon points="599,1928.1 605,1922.1 605,1926.1 599,1932.1" fill="#a4a4a4" /><path d="M608.5 1904.6V1926.1" fill="none" stroke="#222" stroke-width="1.2" /><polygon points="608.5,1900.6 606,1905.6 611,1905.6" fill="#222" />
<rect x="594" y="1938" width="4" height="10" fill="#c8c8c8" />
<path d="M632.0 1901.8H652.8M632.0 1928.0H643.9" fill="none" stroke="#a6a6a6" stroke-width="2.2" /><path d="M629.5 1904.5V1925.6999999999998M655.5 1904.5V1915.3" fill="none" stroke="#666" stroke-width="1.3" /><path d="M639.0 1908.5H646.0999999999999M636.3 1911.5V1919.1" fill="none" stroke="#7a7a7a" stroke-width="1.4" /><path d="M649.0 1911.5C647.3 1916.6 643.8 1920.1 638.9 1921.6" fill="none" stroke="#555" stroke-width="1.3" /><rect x="627.8" y="1900.1" width="3.4" height="3.4" fill="#1a8ee6" /><rect x="653.8" y="1900.1" width="3.4" height="3.4" fill="#1a8ee6" /><rect x="627.8" y="1926.5" width="3.4" height="3.4" fill="#1a8ee6" /><rect x="634.7" y="1907.2" width="3.4" height="3.4" fill="#1a8ee6" /><rect x="647.1" y="1907.2" width="3.4" height="3.4" fill="#1a8ee6" /><rect x="634.7" y="1920" width="3.4" height="3.4" fill="#1a8ee6" /><g transform="translate(644.2 1931) rotate(-43.5)"><polygon points="0,0 4.600,-2.500 4.600,2.500" fill="#666"/><polygon points="5.300,-3 14.300,-3 14.300,3.100 5.300,3.100" fill="#fcc24a"/><path d="M15.200 -3h1.500a3.050 3.050 0 0 1 0 6.100h-1.500z" fill="#ff3030"/></g>
<rect x="642" y="1938" width="4" height="10" fill="#c8c8c8" />
<path d="M680.0 1901.8H700.8M680.0 1928.0H691.9" fill="none" stroke="#a6a6a6" stroke-width="2.2" /><path d="M677.5 1904.5V1925.6999999999998M703.5 1904.5V1915.3" fill="none" stroke="#666" stroke-width="1.3" /><path d="M687.0 1908.5H694.0999999999999M684.3 1911.5V1919.1" fill="none" stroke="#7a7a7a" stroke-width="1.4" /><path d="M697.0 1911.5C695.3 1916.6 691.8 1920.1 686.9 1921.6" fill="none" stroke="#555" stroke-width="1.3" /><rect x="675.8" y="1900.1" width="3.4" height="3.4" fill="#1a8ee6" /><rect x="701.8" y="1900.1" width="3.4" height="3.4" fill="#1a8ee6" /><rect x="675.8" y="1926.5" width="3.4" height="3.4" fill="#1a8ee6" /><rect x="682.7" y="1907.2" width="3.4" height="3.4" fill="#1a8ee6" /><rect x="695.1" y="1907.2" width="3.4" height="3.4" fill="#1a8ee6" /><rect x="682.7" y="1920" width="3.4" height="3.4" fill="#1a8ee6" /><g transform="translate(692.2 1931) rotate(-43.5)"><polygon points="0,0 4.600,-2.500 4.600,2.500" fill="#666"/><polygon points="5.300,-3 14.300,-3 14.300,3.100 5.300,3.100" fill="#fcc24a"/><path d="M15.200 -3h1.500a3.050 3.050 0 0 1 0 6.100h-1.500z" fill="#ff3030"/></g>
<rect x="690" y="1938" width="4" height="10" fill="#c8c8c8" />
<path d="M728.0 1901.8H748.8M728.0 1928.0H739.9" fill="none" stroke="#a6a6a6" stroke-width="2.2" /><path d="M725.5 1904.5V1925.6999999999998M751.5 1904.5V1915.3" fill="none" stroke="#666" stroke-width="1.3" /><path d="M735.0 1908.5H742.0999999999999M732.3 1911.5V1919.1" fill="none" stroke="#7a7a7a" stroke-width="1.4" /><path d="M745.0 1911.5C743.3 1916.6 739.8 1920.1 734.9 1921.6" fill="none" stroke="#555" stroke-width="1.3" /><rect x="723.8" y="1900.1" width="3.4" height="3.4" fill="#1a8ee6" /><rect x="749.8" y="1900.1" width="3.4" height="3.4" fill="#1a8ee6" /><rect x="723.8" y="1926.5" width="3.4" height="3.4" fill="#1a8ee6" /><rect x="730.7" y="1907.2" width="3.4" height="3.4" fill="#1a8ee6" /><rect x="743.1" y="1907.2" width="3.4" height="3.4" fill="#1a8ee6" /><rect x="730.7" y="1920" width="3.4" height="3.4" fill="#1a8ee6" /><g transform="translate(740.2 1931) rotate(-43.5)"><polygon points="0,0 4.600,-2.500 4.600,2.500" fill="#666"/><polygon points="5.300,-3 14.300,-3 14.300,3.100 5.300,3.100" fill="#fcc24a"/><path d="M15.200 -3h1.500a3.050 3.050 0 0 1 0 6.100h-1.500z" fill="#ff3030"/></g>
<rect x="738" y="1938" width="4" height="10" fill="#c8c8c8" />
<path d="M776.0 1901.8H796.8M776.0 1928.0H787.9" fill="none" stroke="#a6a6a6" stroke-width="2.2" /><path d="M773.5 1904.5V1925.6999999999998M799.5 1904.5V1915.3" fill="none" stroke="#666" stroke-width="1.3" /><path d="M783.0 1908.5H790.0999999999999M780.3 1911.5V1919.1" fill="none" stroke="#7a7a7a" stroke-width="1.4" /><path d="M793.0 1911.5C791.3 1916.6 787.8 1920.1 782.9 1921.6" fill="none" stroke="#555" stroke-width="1.3" /><rect x="771.8" y="1900.1" width="3.4" height="3.4" fill="#1a8ee6" /><rect x="797.8" y="1900.1" width="3.4" height="3.4" fill="#1a8ee6" /><rect x="771.8" y="1926.5" width="3.4" height="3.4" fill="#1a8ee6" /><rect x="778.7" y="1907.2" width="3.4" height="3.4" fill="#1a8ee6" /><rect x="791.1" y="1907.2" width="3.4" height="3.4" fill="#1a8ee6" /><rect x="778.7" y="1920" width="3.4" height="3.4" fill="#1a8ee6" /><g transform="translate(788.2 1931) rotate(-43.5)"><polygon points="0,0 4.600,-2.500 4.600,2.500" fill="#666"/><polygon points="5.300,-3 14.300,-3 14.300,3.100 5.300,3.100" fill="#fcc24a"/><path d="M15.200 -3h1.500a3.050 3.050 0 0 1 0 6.100h-1.500z" fill="#ff3030"/></g>
<rect x="786" y="1938" width="4" height="10" fill="#c8c8c8" />
<path d="M824.0 1901.8H844.8M824.0 1928.0H835.9" fill="none" stroke="#a6a6a6" stroke-width="2.2" /><path d="M821.5 1904.5V1925.6999999999998M847.5 1904.5V1915.3" fill="none" stroke="#666" stroke-width="1.3" /><path d="M831.0 1908.5H838.0999999999999M828.3 1911.5V1919.1" fill="none" stroke="#7a7a7a" stroke-width="1.4" /><path d="M841.0 1911.5C839.3 1916.6 835.8 1920.1 830.9 1921.6" fill="none" stroke="#555" stroke-width="1.3" /><rect x="819.8" y="1900.1" width="3.4" height="3.4" fill="#1a8ee6" /><rect x="845.8" y="1900.1" width="3.4" height="3.4" fill="#1a8ee6" /><rect x="819.8" y="1926.5" width="3.4" height="3.4" fill="#1a8ee6" /><rect x="826.7" y="1907.2" width="3.4" height="3.4" fill="#1a8ee6" /><rect x="839.1" y="1907.2" width="3.4" height="3.4" fill="#1a8ee6" /><rect x="826.7" y="1920" width="3.4" height="3.4" fill="#1a8ee6" /><g transform="translate(836.2 1931) rotate(-43.5)"><polygon points="0,0 4.600,-2.500 4.600,2.500" fill="#666"/><polygon points="5.300,-3 14.300,-3 14.300,3.100 5.300,3.100" fill="#fcc24a"/><path d="M15.200 -3h1.500a3.050 3.050 0 0 1 0 6.100h-1.500z" fill="#ff3030"/></g>
<rect x="834" y="1938" width="4" height="10" fill="#c8c8c8" />
<path d="M872.0 1901.8H892.8M872.0 1928.0H883.9" fill="none" stroke="#a6a6a6" stroke-width="2.2" /><path d="M869.5 1904.5V1925.6999999999998M895.5 1904.5V1915.3" fill="none" stroke="#666" stroke-width="1.3" /><path d="M879.0 1908.5H886.0999999999999M876.3 1911.5V1919.1" fill="none" stroke="#7a7a7a" stroke-width="1.4" /><path d="M889.0 1911.5C887.3 1916.6 883.8 1920.1 878.9 1921.6" fill="none" stroke="#555" stroke-width="1.3" /><rect x="867.8" y="1900.1" width="3.4" height="3.4" fill="#1a8ee6" /><rect x="893.8" y="1900.1" width="3.4" height="3.4" fill="#1a8ee6" /><rect x="867.8" y="1926.5" width="3.4" height="3.4" fill="#1a8ee6" /><rect x="874.7" y="1907.2" width="3.4" height="3.4" fill="#1a8ee6" /><rect x="887.1" y="1907.2" width="3.4" height="3.4" fill="#1a8ee6" /><rect x="874.7" y="1920" width="3.4" height="3.4" fill="#1a8ee6" /><g transform="translate(884.2 1931) rotate(-43.5)"><polygon points="0,0 4.600,-2.500 4.600,2.500" fill="#666"/><polygon points="5.300,-3 14.300,-3 14.300,3.100 5.300,3.100" fill="#fcc24a"/><path d="M15.200 -3h1.500a3.050 3.050 0 0 1 0 6.100h-1.500z" fill="#ff3030"/></g>
<rect x="882" y="1938" width="4" height="10" fill="#c8c8c8" />
<path d="M920.0 1901.8H940.8M920.0 1928.0H931.9" fill="none" stroke="#a6a6a6" stroke-width="2.2" /><path d="M917.5 1904.5V1925.6999999999998M943.5 1904.5V1915.3" fill="none" stroke="#666" stroke-width="1.3" /><path d="M927.0 1908.5H934.0999999999999M924.3 1911.5V1919.1" fill="none" stroke="#7a7a7a" stroke-width="1.4" /><path d="M937.0 1911.5C935.3 1916.6 931.8 1920.1 926.9 1921.6" fill="none" stroke="#555" stroke-width="1.3" /><rect x="915.8" y="1900.1" width="3.4" height="3.4" fill="#1a8ee6" /><rect x="941.8" y="1900.1" width="3.4" height="3.4" fill="#1a8ee6" /><rect x="915.8" y="1926.5" width="3.4" height="3.4" fill="#1a8ee6" /><rect x="922.7" y="1907.2" width="3.4" height="3.4" fill="#1a8ee6" /><rect x="935.1" y="1907.2" width="3.4" height="3.4" fill="#1a8ee6" /><rect x="922.7" y="1920" width="3.4" height="3.4" fill="#1a8ee6" /><g transform="translate(932.2 1931) rotate(-43.5)"><polygon points="0,0 4.600,-2.500 4.600,2.500" fill="#666"/><polygon points="5.300,-3 14.300,-3 14.300,3.100 5.300,3.100" fill="#fcc24a"/><path d="M15.200 -3h1.500a3.050 3.050 0 0 1 0 6.100h-1.500z" fill="#ff3030"/></g>
<rect x="930" y="1938" width="4" height="10" fill="#c8c8c8" />
<path d="M968.0 1901.8H988.8M968.0 1928.0H979.9" fill="none" stroke="#a6a6a6" stroke-width="2.2" /><path d="M965.5 1904.5V1925.6999999999998M991.5 1904.5V1915.3" fill="none" stroke="#666" stroke-width="1.3" /><path d="M975.0 1908.5H982.0999999999999M972.3 1911.5V1919.1" fill="none" stroke="#7a7a7a" stroke-width="1.4" /><path d="M985.0 1911.5C983.3 1916.6 979.8 1920.1 974.9 1921.6" fill="none" stroke="#555" stroke-width="1.3" /><rect x="963.8" y="1900.1" width="3.4" height="3.4" fill="#1a8ee6" /><rect x="989.8" y="1900.1" width="3.4" height="3.4" fill="#1a8ee6" /><rect x="963.8" y="1926.5" width="3.4" height="3.4" fill="#1a8ee6" /><rect x="970.7" y="1907.2" width="3.4" height="3.4" fill="#1a8ee6" /><rect x="983.1" y="1907.2" width="3.4" height="3.4" fill="#1a8ee6" /><rect x="970.7" y="1920" width="3.4" height="3.4" fill="#1a8ee6" /><g transform="translate(980.2 1931) rotate(-43.5)"><polygon points="0,0 4.600,-2.500 4.600,2.500" fill="#666"/><polygon points="5.300,-3 14.300,-3 14.300,3.100 5.300,3.100" fill="#fcc24a"/><path d="M15.200 -3h1.500a3.050 3.050 0 0 1 0 6.100h-1.500z" fill="#ff3030"/></g>
<rect x="978" y="1938" width="4" height="10" fill="#c8c8c8" />
<rect x="1004" y="1892" width="48" height="48" fill="#e6e62a" rx="5" />
<path d="M1016.0 1901.8H1036.8M1016.0 1928.0H1027.8999999999999" fill="none" stroke="#a6a6a6" stroke-width="2.2" /><path d="M1013.5 1904.5V1925.6999999999998M1039.5 1904.5V1915.3" fill="none" stroke="#666" stroke-width="1.3" /><path d="M1023.0 1908.5H1030.1M1020.3 1911.5V1919.1" fill="none" stroke="#7a7a7a" stroke-width="1.4" /><path d="M1033.0 1911.5C1031.3 1916.6 1027.8 1920.1 1022.9 1921.6" fill="none" stroke="#555" stroke-width="1.3" /><rect x="1011.8" y="1900.1" width="3.4" height="3.4" fill="#1a8ee6" /><rect x="1037.8" y="1900.1" width="3.4" height="3.4" fill="#1a8ee6" /><rect x="1011.8" y="1926.5" width="3.4" height="3.4" fill="#1a8ee6" /><rect x="1018.7" y="1907.2" width="3.4" height="3.4" fill="#1a8ee6" /><rect x="1031.1" y="1907.2" width="3.4" height="3.4" fill="#1a8ee6" /><rect x="1018.7" y="1920" width="3.4" height="3.4" fill="#1a8ee6" /><g transform="translate(1028.2 1931) rotate(-43.5)"><polygon points="0,0 4.600,-2.500 4.600,2.500" fill="#666"/><polygon points="5.300,-3 14.300,-3 14.300,3.100 5.300,3.100" fill="#fcc24a"/><path d="M15.200 -3h1.500a3.050 3.050 0 0 1 0 6.100h-1.500z" fill="#ff3030"/></g>
<rect x="1026" y="1938" width="4" height="10" fill="#c8c8c8" />
<path d="M1064.0 1901.8H1084.8M1064.0 1928.0H1075.8999999999999" fill="none" stroke="#a6a6a6" stroke-width="2.2" /><path d="M1061.5 1904.5V1925.6999999999998M1087.5 1904.5V1915.3" fill="none" stroke="#666" stroke-width="1.3" /><path d="M1071.0 1908.5H1078.1M1068.3 1911.5V1919.1" fill="none" stroke="#7a7a7a" stroke-width="1.4" /><path d="M1081.0 1911.5C1079.3 1916.6 1075.8 1920.1 1070.8999999999999 1921.6" fill="none" stroke="#555" stroke-width="1.3" /><rect x="1059.8" y="1900.1" width="3.4" height="3.4" fill="#1a8ee6" /><rect x="1085.8" y="1900.1" width="3.4" height="3.4" fill="#1a8ee6" /><rect x="1059.8" y="1926.5" width="3.4" height="3.4" fill="#1a8ee6" /><rect x="1066.7" y="1907.2" width="3.4" height="3.4" fill="#1a8ee6" /><rect x="1079.1" y="1907.2" width="3.4" height="3.4" fill="#1a8ee6" /><rect x="1066.7" y="1920" width="3.4" height="3.4" fill="#1a8ee6" /><g transform="translate(1076.2 1931) rotate(-43.5)"><polygon points="0,0 4.600,-2.500 4.600,2.500" fill="#666"/><polygon points="5.300,-3 14.300,-3 14.300,3.100 5.300,3.100" fill="#fcc24a"/><path d="M15.200 -3h1.500a3.050 3.050 0 0 1 0 6.100h-1.500z" fill="#ff3030"/></g>
<rect x="1074" y="1938" width="4" height="10" fill="#c8c8c8" />
<path d="M1112.0 1901.8H1132.8M1112.0 1928.0H1123.8999999999999" fill="none" stroke="#a6a6a6" stroke-width="2.2" /><path d="M1109.5 1904.5V1925.6999999999998M1135.5 1904.5V1915.3" fill="none" stroke="#666" stroke-width="1.3" /><path d="M1119.0 1908.5H1126.1M1116.3 1911.5V1919.1" fill="none" stroke="#7a7a7a" stroke-width="1.4" /><path d="M1129.0 1911.5C1127.3 1916.6 1123.8 1920.1 1118.8999999999999 1921.6" fill="none" stroke="#555" stroke-width="1.3" /><rect x="1107.8" y="1900.1" width="3.4" height="3.4" fill="#1a8ee6" /><rect x="1133.8" y="1900.1" width="3.4" height="3.4" fill="#1a8ee6" /><rect x="1107.8" y="1926.5" width="3.4" height="3.4" fill="#1a8ee6" /><rect x="1114.7" y="1907.2" width="3.4" height="3.4" fill="#1a8ee6" /><rect x="1127.1" y="1907.2" width="3.4" height="3.4" fill="#1a8ee6" /><rect x="1114.7" y="1920" width="3.4" height="3.4" fill="#1a8ee6" /><g transform="translate(1124.2 1931) rotate(-43.5)"><polygon points="0,0 4.600,-2.500 4.600,2.500" fill="#666"/><polygon points="5.300,-3 14.300,-3 14.300,3.100 5.300,3.100" fill="#fcc24a"/><path d="M15.200 -3h1.500a3.050 3.050 0 0 1 0 6.100h-1.500z" fill="#ff3030"/></g>
<rect x="1122" y="1938" width="4" height="10" fill="#c8c8c8" />
<polygon points="1157,1906.1 1163,1900.1 1181,1900.1 1175,1906.1" fill="#8ccbfa" /><polygon points="1175,1906.1 1181,1900.1 1181,1921.1 1175,1927.1" fill="#4a96d0" /><rect x="1157" y="1906.1" width="18" height="21" fill="#6ab0e6" /><polygon points="1157,1927.1 1175,1927.1 1181,1921.1 1181,1922.1 1175,1928.1 1157,1928.1" fill="#fbfbfb" /><rect x="1157" y="1928.1" width="18" height="4" fill="#b2b2b2" /><polygon points="1175,1928.1 1181,1922.1 1181,1926.1 1175,1932.1" fill="#a4a4a4" /><path d="M1184.5 1904.6V1926.1" fill="none" stroke="#222" stroke-width="1.2" /><polygon points="1184.5,1900.6 1182,1905.6 1187,1905.6" fill="#222" />
<rect x="1170" y="1938" width="4" height="10" fill="#c8c8c8" />
<path d="M1208.0 1901.8H1228.8M1208.0 1928.0H1219.8999999999999" fill="none" stroke="#a6a6a6" stroke-width="2.2" /><path d="M1205.5 1904.5V1925.6999999999998M1231.5 1904.5V1915.3" fill="none" stroke="#666" stroke-width="1.3" /><path d="M1215.0 1908.5H1222.1M1212.3 1911.5V1919.1" fill="none" stroke="#7a7a7a" stroke-width="1.4" /><path d="M1225.0 1911.5C1223.3 1916.6 1219.8 1920.1 1214.8999999999999 1921.6" fill="none" stroke="#555" stroke-width="1.3" /><rect x="1203.8" y="1900.1" width="3.4" height="3.4" fill="#1a8ee6" /><rect x="1229.8" y="1900.1" width="3.4" height="3.4" fill="#1a8ee6" /><rect x="1203.8" y="1926.5" width="3.4" height="3.4" fill="#1a8ee6" /><rect x="1210.7" y="1907.2" width="3.4" height="3.4" fill="#1a8ee6" /><rect x="1223.1" y="1907.2" width="3.4" height="3.4" fill="#1a8ee6" /><rect x="1210.7" y="1920" width="3.4" height="3.4" fill="#1a8ee6" /><g transform="translate(1220.2 1931) rotate(-43.5)"><polygon points="0,0 4.600,-2.500 4.600,2.500" fill="#666"/><polygon points="5.300,-3 14.300,-3 14.300,3.100 5.300,3.100" fill="#fcc24a"/><path d="M15.200 -3h1.500a3.050 3.050 0 0 1 0 6.100h-1.500z" fill="#ff3030"/></g>
<rect x="1218" y="1938" width="4" height="10" fill="#c8c8c8" />
<path d="M1256.0 1901.8H1276.8M1256.0 1928.0H1267.8999999999999" fill="none" stroke="#a6a6a6" stroke-width="2.2" /><path d="M1253.5 1904.5V1925.6999999999998M1279.5 1904.5V1915.3" fill="none" stroke="#666" stroke-width="1.3" /><path d="M1263.0 1908.5H1270.1M1260.3 1911.5V1919.1" fill="none" stroke="#7a7a7a" stroke-width="1.4" /><path d="M1273.0 1911.5C1271.3 1916.6 1267.8 1920.1 1262.8999999999999 1921.6" fill="none" stroke="#555" stroke-width="1.3" /><rect x="1251.8" y="1900.1" width="3.4" height="3.4" fill="#1a8ee6" /><rect x="1277.8" y="1900.1" width="3.4" height="3.4" fill="#1a8ee6" /><rect x="1251.8" y="1926.5" width="3.4" height="3.4" fill="#1a8ee6" /><rect x="1258.7" y="1907.2" width="3.4" height="3.4" fill="#1a8ee6" /><rect x="1271.1" y="1907.2" width="3.4" height="3.4" fill="#1a8ee6" /><rect x="1258.7" y="1920" width="3.4" height="3.4" fill="#1a8ee6" /><g transform="translate(1268.2 1931) rotate(-43.5)"><polygon points="0,0 4.600,-2.500 4.600,2.500" fill="#666"/><polygon points="5.300,-3 14.300,-3 14.300,3.100 5.300,3.100" fill="#fcc24a"/><path d="M15.200 -3h1.500a3.050 3.050 0 0 1 0 6.100h-1.500z" fill="#ff3030"/></g>
<rect x="1266" y="1938" width="4" height="10" fill="#c8c8c8" />
<polygon points="1301,1906.1 1307,1900.1 1325,1900.1 1319,1906.1" fill="#8ccbfa" /><polygon points="1319,1906.1 1325,1900.1 1325,1921.1 1319,1927.1" fill="#4a96d0" /><rect x="1301" y="1906.1" width="18" height="21" fill="#6ab0e6" /><polygon points="1301,1927.1 1319,1927.1 1325,1921.1 1325,1922.1 1319,1928.1 1301,1928.1" fill="#fbfbfb" /><rect x="1301" y="1928.1" width="18" height="4" fill="#b2b2b2" /><polygon points="1319,1928.1 1325,1922.1 1325,1926.1 1319,1932.1" fill="#a4a4a4" /><path d="M1328.5 1904.6V1926.1" fill="none" stroke="#222" stroke-width="1.2" /><polygon points="1328.5,1900.6 1326,1905.6 1331,1905.6" fill="#222" />
<rect x="1314" y="1938" width="4" height="10" fill="#c8c8c8" />
<g transform="translate(800 1804) scale(0.5)"><polygon points="1098,207 1112,193 1131,193 1119,206" fill="#f3f3f3" /><path d="M1098 208H1120C1135 209 1145 222 1145 238V255H1098Z" fill="#dadada" /><path d="M1119.500 205.500L1132 192.500C1148 195 1158.500 206 1160 219.500L1146.500 233C1145 218 1135 207.500 1119.500 205.500Z" fill="#6ab0e6" stroke="#5aa2dc" stroke-width="1" /><polygon points="1145,238.5 1159,224.5 1159,241 1145,255" fill="#b4b4b4" /><path d="M1130 193H1112L1097 208V255H1145L1159 241V225" fill="none" stroke="#666" stroke-width="2" stroke-linejoin="round"/></g>
<rect x="1362" y="1938" width="4" height="10" fill="#c8c8c8" />
<polygon points="1407,1905.6 1412.5,1900.1 1428,1900.1 1422.5,1905.6" fill="#8ccbfa" /><polygon points="1422.5,1905.6 1428,1900.1 1428,1916.1 1422.5,1921.6" fill="#4a96d0" /><rect x="1407" y="1905.6" width="15.5" height="16" fill="#6ab0e6" /><rect x="1396.7" y="1906.6" width="25.3" height="25.3" fill="#f7f7f7" stroke="#555" stroke-width="1.3" /><polygon points="1401,1911.4 1405,1908.2 1419.7,1908.2 1417,1911.4" fill="#8ccbfa" /><polygon points="1417,1911.4 1419.7,1908.2 1419.7,1923.8 1417,1926.6" fill="#4a96d0" /><rect x="1401.6" y="1912" width="15" height="14.4" fill="#f4f4f4" stroke="#555" stroke-width="1.5" />
<rect x="1410" y="1938" width="4" height="10" fill="#c8c8c8" />
<path d="M1448.0 1901.8H1468.8M1448.0 1928.0H1459.8999999999999" fill="none" stroke="#a6a6a6" stroke-width="2.2" /><path d="M1445.5 1904.5V1925.6999999999998M1471.5 1904.5V1915.3" fill="none" stroke="#666" stroke-width="1.3" /><path d="M1455.0 1908.5H1462.1M1452.3 1911.5V1919.1" fill="none" stroke="#7a7a7a" stroke-width="1.4" /><path d="M1465.0 1911.5C1463.3 1916.6 1459.8 1920.1 1454.8999999999999 1921.6" fill="none" stroke="#555" stroke-width="1.3" /><rect x="1443.8" y="1900.1" width="3.4" height="3.4" fill="#1a8ee6" /><rect x="1469.8" y="1900.1" width="3.4" height="3.4" fill="#1a8ee6" /><rect x="1443.8" y="1926.5" width="3.4" height="3.4" fill="#1a8ee6" /><rect x="1450.7" y="1907.2" width="3.4" height="3.4" fill="#1a8ee6" /><rect x="1463.1" y="1907.2" width="3.4" height="3.4" fill="#1a8ee6" /><rect x="1450.7" y="1920" width="3.4" height="3.4" fill="#1a8ee6" /><g transform="translate(1460.2 1931) rotate(-43.5)"><polygon points="0,0 4.600,-2.500 4.600,2.500" fill="#666"/><polygon points="5.300,-3 14.300,-3 14.300,3.100 5.300,3.100" fill="#fcc24a"/><path d="M15.200 -3h1.500a3.050 3.050 0 0 1 0 6.100h-1.500z" fill="#ff3030"/></g>
<rect x="1458" y="1938" width="4" height="10" fill="#c8c8c8" />
<rect x="1493.5" y="1901" width="29" height="29.500" rx="9" fill="#b48aea" stroke="#a47fe0" stroke-width="1.500" opacity="0.9" filter="url(#blr)"/><rect x="1498" y="1908" width="19" height="19" rx="5" fill="#9f72dd" opacity="0.9"/><path d="M1508 1903V1930M1494 1917H1522" stroke="#c9a8f5" stroke-width="1.500" fill="none"/>
<rect x="1506" y="1938" width="4" height="10" fill="#c8c8c8" />
<path d="M1544.0 1901.8H1564.8M1544.0 1928.0H1555.8999999999999" fill="none" stroke="#a6a6a6" stroke-width="2.2" /><path d="M1541.5 1904.5V1925.6999999999998M1567.5 1904.5V1915.3" fill="none" stroke="#666" stroke-width="1.3" /><path d="M1551.0 1908.5H1558.1M1548.3 1911.5V1919.1" fill="none" stroke="#7a7a7a" stroke-width="1.4" /><path d="M1561.0 1911.5C1559.3 1916.6 1555.8 1920.1 1550.8999999999999 1921.6" fill="none" stroke="#555" stroke-width="1.3" /><rect x="1539.8" y="1900.1" width="3.4" height="3.4" fill="#1a8ee6" /><rect x="1565.8" y="1900.1" width="3.4" height="3.4" fill="#1a8ee6" /><rect x="1539.8" y="1926.5" width="3.4" height="3.4" fill="#1a8ee6" /><rect x="1546.7" y="1907.2" width="3.4" height="3.4" fill="#1a8ee6" /><rect x="1559.1" y="1907.2" width="3.4" height="3.4" fill="#1a8ee6" /><rect x="1546.7" y="1920" width="3.4" height="3.4" fill="#1a8ee6" /><g transform="translate(1556.2 1931) rotate(-43.5)"><polygon points="0,0 4.600,-2.500 4.600,2.500" fill="#666"/><polygon points="5.300,-3 14.300,-3 14.300,3.100 5.300,3.100" fill="#fcc24a"/><path d="M15.200 -3h1.500a3.050 3.050 0 0 1 0 6.100h-1.500z" fill="#ff3030"/></g>
<rect x="1554" y="1938" width="4" height="10" fill="#c8c8c8" />
<g transform="translate(868 1804) scale(0.5)"><path d="M1472 205V243M1453 224H1491" fill="none" stroke="#333" stroke-width="4.5" /><polygon points="1472,192 1462,208 1482,208" fill="#333" /><polygon points="1472,256 1462,240 1482,240" fill="#333" /><polygon points="1440.5,224 1456.5,214 1456.5,234" fill="#333" /><polygon points="1503.5,224 1487.5,214 1487.5,234" fill="#333" /></g>
<rect x="1602" y="1938" width="4" height="10" fill="#c8c8c8" />
<path d="M1636 1914.2C1637 1909 1642 1903.5 1647 1902.2C1650 1903 1652 1908.5 1654.6 1909.7C1658 1911 1662 1910.5 1665.7 1910.2L1658.7 1917.5C1655 1917.5 1652 1917 1649.6 1915.8C1648 1915 1647 1914 1646 1913.7Z" fill="#8ccbfa" stroke="#5aa2dc" stroke-width="1" /><path d="M1636 1914.2C1637 1910 1641 1906 1644.5 1910.2L1646 1913.7L1637 1919.8Z" fill="#4a96d0" /><path d="M1637 1921.3L1645.3 1914.4V1919.8L1637 1929Z" fill="#f6f6f6" stroke="#555" stroke-width="1.5" stroke-linejoin="round"/>
<rect x="1650" y="1938" width="4" height="10" fill="#c8c8c8" />
<path d="M1688.0 1901.8H1708.8M1688.0 1928.0H1699.8999999999999" fill="none" stroke="#a6a6a6" stroke-width="2.2" /><path d="M1685.5 1904.5V1925.6999999999998M1711.5 1904.5V1915.3" fill="none" stroke="#666" stroke-width="1.3" /><path d="M1695.0 1908.5H1702.1M1692.3 1911.5V1919.1" fill="none" stroke="#7a7a7a" stroke-width="1.4" /><path d="M1705.0 1911.5C1703.3 1916.6 1699.8 1920.1 1694.8999999999999 1921.6" fill="none" stroke="#555" stroke-width="1.3" /><rect x="1683.8" y="1900.1" width="3.4" height="3.4" fill="#1a8ee6" /><rect x="1709.8" y="1900.1" width="3.4" height="3.4" fill="#1a8ee6" /><rect x="1683.8" y="1926.5" width="3.4" height="3.4" fill="#1a8ee6" /><rect x="1690.7" y="1907.2" width="3.4" height="3.4" fill="#1a8ee6" /><rect x="1703.1" y="1907.2" width="3.4" height="3.4" fill="#1a8ee6" /><rect x="1690.7" y="1920" width="3.4" height="3.4" fill="#1a8ee6" /><g transform="translate(1700.2 1931) rotate(-43.5)"><polygon points="0,0 4.600,-2.500 4.600,2.500" fill="#666"/><polygon points="5.300,-3 14.300,-3 14.300,3.100 5.300,3.100" fill="#fcc24a"/><path d="M15.200 -3h1.500a3.050 3.050 0 0 1 0 6.100h-1.500z" fill="#ff3030"/></g>
<rect x="1698" y="1938" width="4" height="10" fill="#c8c8c8" />
<path d="M1733 1906.7V1925.3A15 5.700 0 0 0 1763 1925.3V1906.7Z" fill="#6ab0e6" /><ellipse cx="1748" cy="1906.7" rx="15" ry="5.700" fill="#8ccbfa"/>
<rect x="1746" y="1938" width="4" height="10" fill="#c8c8c8" />
<polygon points="1781,1906.1 1787,1900.1 1805,1900.1 1799,1906.1" fill="#8ccbfa" /><polygon points="1799,1906.1 1805,1900.1 1805,1921.1 1799,1927.1" fill="#4a96d0" /><rect x="1781" y="1906.1" width="18" height="21" fill="#6ab0e6" /><polygon points="1781,1927.1 1799,1927.1 1805,1921.1 1805,1922.1 1799,1928.1 1781,1928.1" fill="#fbfbfb" /><rect x="1781" y="1928.1" width="18" height="4" fill="#b2b2b2" /><polygon points="1799,1928.1 1805,1922.1 1805,1926.1 1799,1932.1" fill="#a4a4a4" /><path d="M1808.5 1904.6V1926.1" fill="none" stroke="#222" stroke-width="1.2" /><polygon points="1808.5,1900.6 1806,1905.6 1811,1905.6" fill="#222" />
<rect x="1794" y="1938" width="4" height="10" fill="#c8c8c8" />
<path d="M1829 1906.7V1925.3A15 5.700 0 0 0 1859 1925.3V1906.7Z" fill="#6ab0e6" /><ellipse cx="1844" cy="1906.7" rx="15" ry="5.700" fill="#8ccbfa"/>
<rect x="1842" y="1938" width="4" height="10" fill="#c8c8c8" />
<polygon points="1877,1906.1 1883,1900.1 1901,1900.1 1895,1906.1" fill="#8ccbfa" /><polygon points="1895,1906.1 1901,1900.1 1901,1921.1 1895,1927.1" fill="#4a96d0" /><rect x="1877" y="1906.1" width="18" height="21" fill="#6ab0e6" /><polygon points="1877,1927.1 1895,1927.1 1901,1921.1 1901,1922.1 1895,1928.1 1877,1928.1" fill="#fbfbfb" /><rect x="1877" y="1928.1" width="18" height="4" fill="#b2b2b2" /><polygon points="1895,1928.1 1901,1922.1 1901,1926.1 1895,1932.1" fill="#a4a4a4" /><path d="M1904.5 1904.6V1926.1" fill="none" stroke="#222" stroke-width="1.2" /><polygon points="1904.5,1900.6 1902,1905.6 1907,1905.6" fill="#222" />
<rect x="1890" y="1938" width="4" height="10" fill="#c8c8c8" />
<path d="M1925 1906.7V1925.3A15 5.700 0 0 0 1955 1925.3V1906.7Z" fill="#6ab0e6" /><ellipse cx="1940" cy="1906.7" rx="15" ry="5.700" fill="#8ccbfa"/>
<rect x="1938" y="1938" width="4" height="10" fill="#c8c8c8" />
<path d="M1975.3 1903.6L1982.7 1910.6M1982.7 1903.6L1975.3 1910.6" fill="none" stroke="#b81818" stroke-width="3.7" stroke-linecap="round"/><path d="M1975.3 1903.6L1982.7 1910.6M1982.7 1903.6L1975.3 1910.6" fill="none" stroke="#f24040" stroke-width="2.3" stroke-linecap="round"/><polygon points="1984.6,1916.5 1989.5,1911.2 2003,1911.2 1998,1916.5" fill="#fdfdfd" stroke="#222" stroke-width="1.2" stroke-linejoin="round"/><polygon points="1998,1916.5 2003,1911.2 2003,1925.3 1998,1929.7" fill="#c4c9d2" stroke="#222" stroke-width="1.2" stroke-linejoin="round"/><rect x="1984.3" y="1916.5" width="13.5" height="13.2" fill="url(#rmg)" stroke="#1a66c0" stroke-width="1.6" rx="1.5" />
<rect x="1986" y="1938" width="4" height="10" fill="#c8c8c8" />
<path d="M2023.3 1903.6L2030.7 1910.6M2030.7 1903.6L2023.3 1910.6" fill="none" stroke="#b81818" stroke-width="3.7" stroke-linecap="round"/><path d="M2023.3 1903.6L2030.7 1910.6M2030.7 1903.6L2023.3 1910.6" fill="none" stroke="#f24040" stroke-width="2.3" stroke-linecap="round"/><polygon points="2032.6,1916.5 2037.5,1911.2 2051,1911.2 2046,1916.5" fill="#fdfdfd" stroke="#222" stroke-width="1.2" stroke-linejoin="round"/><polygon points="2046,1916.5 2051,1911.2 2051,1925.3 2046,1929.7" fill="#c4c9d2" stroke="#222" stroke-width="1.2" stroke-linejoin="round"/><rect x="2032.3" y="1916.5" width="13.5" height="13.2" fill="url(#rmg)" stroke="#1a66c0" stroke-width="1.6" rx="1.5" />
<rect x="2034" y="1938" width="4" height="10" fill="#c8c8c8" />
<path d="M2072.0 1901.8H2092.8M2072.0 1928.0H2083.9" fill="none" stroke="#a6a6a6" stroke-width="2.2" /><path d="M2069.5 1904.5V1925.6999999999998M2095.5 1904.5V1915.3" fill="none" stroke="#666" stroke-width="1.3" /><path d="M2079.0 1908.5H2086.1000000000004M2076.3 1911.5V1919.1" fill="none" stroke="#7a7a7a" stroke-width="1.4" /><path d="M2089.0 1911.5C2087.3 1916.6 2083.8 1920.1 2078.9 1921.6" fill="none" stroke="#555" stroke-width="1.3" /><rect x="2067.8" y="1900.1" width="3.4" height="3.4" fill="#1a8ee6" /><rect x="2093.8" y="1900.1" width="3.4" height="3.4" fill="#1a8ee6" /><rect x="2067.8" y="1926.5" width="3.4" height="3.4" fill="#1a8ee6" /><rect x="2074.7" y="1907.2" width="3.4" height="3.4" fill="#1a8ee6" /><rect x="2087.1" y="1907.2" width="3.4" height="3.4" fill="#1a8ee6" /><rect x="2074.7" y="1920" width="3.4" height="3.4" fill="#1a8ee6" /><g transform="translate(2084.2 1931) rotate(-43.5)"><polygon points="0,0 4.600,-2.500 4.600,2.500" fill="#666"/><polygon points="5.300,-3 14.300,-3 14.300,3.100 5.300,3.100" fill="#fcc24a"/><path d="M15.200 -3h1.500a3.050 3.050 0 0 1 0 6.100h-1.500z" fill="#ff3030"/></g>
<rect x="2082" y="1938" width="4" height="10" fill="#c8c8c8" />
<polygon points="2117,1906.1 2123,1900.1 2141,1900.1 2135,1906.1" fill="#8ccbfa" /><polygon points="2135,1906.1 2141,1900.1 2141,1921.1 2135,1927.1" fill="#4a96d0" /><rect x="2117" y="1906.1" width="18" height="21" fill="#6ab0e6" /><polygon points="2117,1927.1 2135,1927.1 2141,1921.1 2141,1922.1 2135,1928.1 2117,1928.1" fill="#fbfbfb" /><rect x="2117" y="1928.1" width="18" height="4" fill="#b2b2b2" /><polygon points="2135,1928.1 2141,1922.1 2141,1926.1 2135,1932.1" fill="#a4a4a4" /><path d="M2144.5 1904.6V1926.1" fill="none" stroke="#222" stroke-width="1.2" /><polygon points="2144.5,1900.6 2142,1905.6 2147,1905.6" fill="#222" />
<rect x="2130" y="1938" width="4" height="10" fill="#c8c8c8" />
<polygon points="2165,1906.1 2171,1900.1 2189,1900.1 2183,1906.1" fill="#8ccbfa" /><polygon points="2183,1906.1 2189,1900.1 2189,1921.1 2183,1927.1" fill="#4a96d0" /><rect x="2165" y="1906.1" width="18" height="21" fill="#6ab0e6" /><polygon points="2165,1927.1 2183,1927.1 2189,1921.1 2189,1922.1 2183,1928.1 2165,1928.1" fill="#fbfbfb" /><rect x="2165" y="1928.1" width="18" height="4" fill="#b2b2b2" /><polygon points="2183,1928.1 2189,1922.1 2189,1926.1 2183,1932.1" fill="#a4a4a4" /><path d="M2192.5 1904.6V1926.1" fill="none" stroke="#222" stroke-width="1.2" /><polygon points="2192.5,1900.6 2190,1905.6 2195,1905.6" fill="#222" />
<rect x="2178" y="1938" width="4" height="10" fill="#c8c8c8" />
<polygon points="2213,1906.1 2219,1900.1 2237,1900.1 2231,1906.1" fill="#8ccbfa" /><polygon points="2231,1906.1 2237,1900.1 2237,1921.1 2231,1927.1" fill="#4a96d0" /><rect x="2213" y="1906.1" width="18" height="21" fill="#6ab0e6" /><polygon points="2213,1927.1 2231,1927.1 2237,1921.1 2237,1922.1 2231,1928.1 2213,1928.1" fill="#fbfbfb" /><rect x="2213" y="1928.1" width="18" height="4" fill="#b2b2b2" /><polygon points="2231,1928.1 2237,1922.1 2237,1926.1 2231,1932.1" fill="#a4a4a4" /><path d="M2240.5 1904.6V1926.1" fill="none" stroke="#222" stroke-width="1.2" /><polygon points="2240.5,1900.6 2238,1905.6 2243,1905.6" fill="#222" />
<rect x="2226" y="1938" width="4" height="10" fill="#c8c8c8" />
<polygon points="2261,1906.1 2267,1900.1 2285,1900.1 2279,1906.1" fill="#8ccbfa" /><polygon points="2279,1906.1 2285,1900.1 2285,1921.1 2279,1927.1" fill="#4a96d0" /><rect x="2261" y="1906.1" width="18" height="21" fill="#6ab0e6" /><polygon points="2261,1927.1 2279,1927.1 2285,1921.1 2285,1922.1 2279,1928.1 2261,1928.1" fill="#fbfbfb" /><rect x="2261" y="1928.1" width="18" height="4" fill="#b2b2b2" /><polygon points="2279,1928.1 2285,1922.1 2285,1926.1 2279,1932.1" fill="#a4a4a4" /><path d="M2288.5 1904.6V1926.1" fill="none" stroke="#222" stroke-width="1.2" /><polygon points="2288.5,1900.6 2286,1905.6 2291,1905.6" fill="#222" />
<rect x="2274" y="1938" width="4" height="10" fill="#c8c8c8" />
<polygon points="2309,1906.1 2315,1900.1 2333,1900.1 2327,1906.1" fill="#8ccbfa" /><polygon points="2327,1906.1 2333,1900.1 2333,1921.1 2327,1927.1" fill="#4a96d0" /><rect x="2309" y="1906.1" width="18" height="21" fill="#6ab0e6" /><polygon points="2309,1927.1 2327,1927.1 2333,1921.1 2333,1922.1 2327,1928.1 2309,1928.1" fill="#fbfbfb" /><rect x="2309" y="1928.1" width="18" height="4" fill="#b2b2b2" /><polygon points="2327,1928.1 2333,1922.1 2333,1926.1 2327,1932.1" fill="#a4a4a4" /><path d="M2336.5 1904.6V1926.1" fill="none" stroke="#222" stroke-width="1.2" /><polygon points="2336.5,1900.6 2334,1905.6 2339,1905.6" fill="#222" />
<rect x="2322" y="1938" width="4" height="10" fill="#c8c8c8" />
<polygon points="2357,1906.1 2363,1900.1 2381,1900.1 2375,1906.1" fill="#8ccbfa" /><polygon points="2375,1906.1 2381,1900.1 2381,1921.1 2375,1927.1" fill="#4a96d0" /><rect x="2357" y="1906.1" width="18" height="21" fill="#6ab0e6" /><polygon points="2357,1927.1 2375,1927.1 2381,1921.1 2381,1922.1 2375,1928.1 2357,1928.1" fill="#fbfbfb" /><rect x="2357" y="1928.1" width="18" height="4" fill="#b2b2b2" /><polygon points="2375,1928.1 2381,1922.1 2381,1926.1 2375,1932.1" fill="#a4a4a4" /><path d="M2384.5 1904.6V1926.1" fill="none" stroke="#222" stroke-width="1.2" /><polygon points="2384.5,1900.6 2382,1905.6 2387,1905.6" fill="#222" />
<rect x="2370" y="1938" width="4" height="10" fill="#c8c8c8" />
<polygon points="2405,1906.1 2411,1900.1 2429,1900.1 2423,1906.1" fill="#8ccbfa" /><polygon points="2423,1906.1 2429,1900.1 2429,1921.1 2423,1927.1" fill="#4a96d0" /><rect x="2405" y="1906.1" width="18" height="21" fill="#6ab0e6" /><polygon points="2405,1927.1 2423,1927.1 2429,1921.1 2429,1922.1 2423,1928.1 2405,1928.1" fill="#fbfbfb" /><rect x="2405" y="1928.1" width="18" height="4" fill="#b2b2b2" /><polygon points="2423,1928.1 2429,1922.1 2429,1926.1 2423,1932.1" fill="#a4a4a4" /><path d="M2432.5 1904.6V1926.1" fill="none" stroke="#222" stroke-width="1.2" /><polygon points="2432.5,1900.6 2430,1905.6 2435,1905.6" fill="#222" />
<rect x="2418" y="1938" width="4" height="10" fill="#c8c8c8" />
<polygon points="2463,1905.6 2468.5,1900.1 2484,1900.1 2478.5,1905.6" fill="#8ccbfa" /><polygon points="2478.5,1905.6 2484,1900.1 2484,1916.1 2478.5,1921.6" fill="#4a96d0" /><rect x="2463" y="1905.6" width="15.5" height="16" fill="#6ab0e6" /><rect x="2452.7" y="1906.6" width="25.3" height="25.3" fill="#f7f7f7" stroke="#555" stroke-width="1.3" /><polygon points="2457,1911.4 2461,1908.2 2475.7,1908.2 2473,1911.4" fill="#8ccbfa" /><polygon points="2473,1911.4 2475.7,1908.2 2475.7,1923.8 2473,1926.6" fill="#4a96d0" /><rect x="2457.6" y="1912" width="15" height="14.4" fill="#f4f4f4" stroke="#555" stroke-width="1.5" />
<rect x="2466" y="1938" width="4" height="10" fill="#c8c8c8" />
<path d="M2504.0 1901.8H2524.8M2504.0 1928.0H2515.9" fill="none" stroke="#a6a6a6" stroke-width="2.2" /><path d="M2501.5 1904.5V1925.6999999999998M2527.5 1904.5V1915.3" fill="none" stroke="#666" stroke-width="1.3" /><path d="M2511.0 1908.5H2518.1000000000004M2508.3 1911.5V1919.1" fill="none" stroke="#7a7a7a" stroke-width="1.4" /><path d="M2521.0 1911.5C2519.3 1916.6 2515.8 1920.1 2510.9 1921.6" fill="none" stroke="#555" stroke-width="1.3" /><rect x="2499.8" y="1900.1" width="3.4" height="3.4" fill="#1a8ee6" /><rect x="2525.8" y="1900.1" width="3.4" height="3.4" fill="#1a8ee6" /><rect x="2499.8" y="1926.5" width="3.4" height="3.4" fill="#1a8ee6" /><rect x="2506.7" y="1907.2" width="3.4" height="3.4" fill="#1a8ee6" /><rect x="2519.1" y="1907.2" width="3.4" height="3.4" fill="#1a8ee6" /><rect x="2506.7" y="1920" width="3.4" height="3.4" fill="#1a8ee6" /><g transform="translate(2516.2 1931) rotate(-43.5)"><polygon points="0,0 4.600,-2.500 4.600,2.500" fill="#666"/><polygon points="5.300,-3 14.300,-3 14.300,3.100 5.300,3.100" fill="#fcc24a"/><path d="M15.200 -3h1.500a3.050 3.050 0 0 1 0 6.100h-1.500z" fill="#ff3030"/></g>
<rect x="2514" y="1938" width="4" height="10" fill="#c8c8c8" />
<rect x="308" y="1948" width="2210" height="4" fill="#c8c8c8" />
<path d="M2528 1888.500H2552V1899L2546 1904H2542.500V1951H2538V1904H2534L2528 1899Z" fill="#666" />
<polygon points="2996.29,1914.46 2996.29,1919.54 2992.15,1919.68 2990.78,1922.99 2993.61,1926.01 2990.01,1929.61 2986.99,1926.78 2983.68,1928.15 2983.54,1932.29 2978.46,1932.29 2978.32,1928.15 2975.01,1926.78 2971.99,1929.61 2968.39,1926.01 2971.22,1922.99 2969.85,1919.68 2965.71,1919.54 2965.71,1914.46 2969.85,1914.32 2971.22,1911.01 2968.39,1907.99 2971.99,1904.39 2975.01,1907.22 2978.32,1905.85 2978.46,1901.71 2983.54,1901.71 2983.68,1905.85 2986.99,1907.22 2990.01,1904.39 2993.61,1907.99 2990.78,1911.01 2992.15,1914.32" fill="#808080" stroke="#808080" stroke-width="1" stroke-linejoin="round"/><circle cx="2981" cy="1917" r="6" fill="#f2f2f2"/>
</g>
</svg>
</body></html>
